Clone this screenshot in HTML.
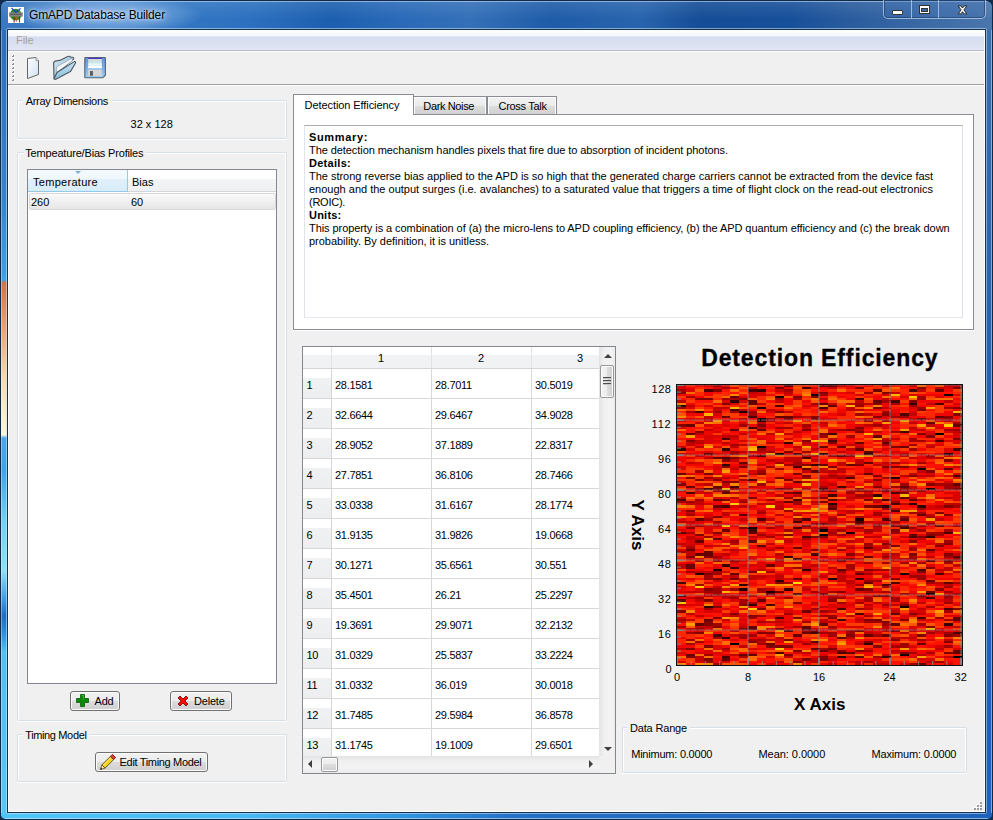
<!DOCTYPE html>
<html><head><meta charset="utf-8"><title>GmAPD Database Builder</title>
<style>
*{margin:0;padding:0;box-sizing:border-box}
html,body{width:993px;height:820px;overflow:hidden;background:#132c48}
body{position:relative;font-family:"Liberation Sans",sans-serif;font-size:11px;color:#000}
.a{position:absolute}
.t{position:absolute;white-space:pre;line-height:1}
.gb{position:absolute;border:1px solid #d5dfe5;border-radius:2px;box-shadow:inset 1px 1px 0 #fff,inset -1px 0 0 #fff,0 1px 0 #fff}
.gbt{position:absolute;background:#f0f0f0;padding:0 2px 0 2px;height:12px}
.btn{position:absolute;border:1px solid #707070;border-radius:3px;background:linear-gradient(#f2f2f2 0,#ebebeb 50%,#dddddd 50%,#cfcfcf 100%);box-shadow:inset 0 0 0 1px #fcfcfc}
.hdr{background:linear-gradient(#ffffff 0,#ffffff 40%,#f1f2f4 40%,#f1f2f4 100%)}
</style></head><body>

<div class="a" style="left:0;top:0;width:993px;height:820px;border-radius:7px 7px 6px 6px;background:#1b4e8f;overflow:hidden;border:1px solid #0d2a4a">
<div class="a" style="left:0;top:0;width:991px;height:30px;background:linear-gradient(90deg,#3a78c0 0px,#3579c4 150px,#2c70bf 250px,#1d5faf 330px,#2a6ab8 400px,#3470b8 470px,#1f5ca8 550px,#2864ad 640px,#154d96 700px,#17509a 790px,#2a5c9e 850px,#4a76ac 990px)"></div>
<div class="a" style="left:0;top:0;width:991px;height:30px;background:linear-gradient(rgba(255,255,255,.1),rgba(255,255,255,0) 60%)"></div>
<div class="a" style="left:10px;top:-6px;width:190px;height:40px;background:radial-gradient(ellipse at center,rgba(200,225,255,.55) 0,rgba(170,205,245,.35) 45%,rgba(120,170,230,0) 72%)"></div>
<div class="a" style="left:5px;top:0;width:981px;height:1px;background:rgba(200,220,245,.6)"></div>
<div class="a" style="left:0;top:29px;width:7px;height:790px;background:linear-gradient(#2d6db9 0.00%,#3585cc 21.65%,#3ea2e4 31.65%,#d27348 32.03%,#eba678 38.10%,#f6dcb0 44.43%,#fbf5d5 50.76%,#fdf8dc 51.27%,#4aa6ea 51.65%,#3fa4e8 55.82%,#6fd2f2 62.15%,#8be2f4 68.48%,#3a98e2 72.28%,#1f6dc4 74.18%,#2a8ad8 76.08%,#4ec0f2 78.61%,#55c8f6 100.00%)"></div>
<div class="a" style="left:0;top:29px;width:1px;height:790px;background:rgba(255,255,255,.35)"></div>
<div class="a" style="left:985px;top:29px;width:7px;height:790px;background:linear-gradient(#3d6fae 0,#2b63ad 30%,#1f5fb3 60%,#1e62b9 100%)"></div>
<div class="a" style="left:990px;top:29px;width:1px;height:785px;background:rgba(200,225,255,.55)"></div>
<div class="a" style="left:0;top:812px;width:991px;height:7px;background:linear-gradient(90deg,#50c6f6 0,#48b8f2 25%,#3296e0 40%,#2470c6 52%,#1e62bb 100%)"></div>
<div class="a" style="left:4px;top:817px;width:983px;height:1px;background:rgba(210,235,255,.6)"></div>
<div class="a" style="left:5px;top:27px;width:981px;height:786px;border:1px solid rgba(210,230,250,.55);border-radius:2px"></div>
<div class="a" style="left:6px;top:28px;width:979px;height:784px;border:1px solid #13324f"></div>
<div class="a" style="left:7px;top:29px;width:977px;height:782px;border:1px solid #fff;background:#f0f0f0"></div>
</div>
<svg class="a" style="left:8px;top:7px" width="16" height="16" viewBox="0 0 16 16">
<rect width="16" height="16" fill="#fff"/>
<circle cx="7.7" cy="7.6" r="5.9" fill="#2e8a1e"/>
<rect x="1" y="5.4" width="13.8" height="4.2" fill="#8c8c8c"/>
<rect x="2" y="6.6" width="11.6" height="1.6" fill="#5e5e5e"/>
<path d="M3.4 0.8 L8 5.4 L12.6 1.4" stroke="#1a3fd0" stroke-width="1.2" fill="none"/>
<path d="M6.1 9.6 V15.4 M11.5 9.6 V15.4" stroke="#8a2e1a" stroke-width="1.1"/>
<path d="M8.6 9.6 V14.6" stroke="#9a6a3a" stroke-width="1"/>
</svg>
<div class="t" style="left:29px;top:8.84px;font-size:12px;color:#000;letter-spacing:-0.155px;text-shadow:0 0 6px rgba(255,255,255,.9),0 0 3px rgba(255,255,255,.7)">GmAPD Database Builder</div>
<div class="a" style="left:883px;top:-2px;width:103px;height:21px;border:1px solid rgba(190,210,235,.75);border-radius:0 0 5px 5px;box-shadow:inset 0 0 0 1px rgba(20,50,90,.5);background:rgba(60,110,175,.35)"></div>
<div class="a" style="left:911px;top:0;width:1px;height:18px;background:rgba(190,210,235,.75)"></div>
<div class="a" style="left:938px;top:0;width:1px;height:18px;background:rgba(190,210,235,.75)"></div>
<div class="a" style="left:892px;top:10px;width:11px;height:5px;background:#fff;border:1px solid #333;border-radius:1px"></div>
<div class="a" style="left:919px;top:5px;width:11px;height:9px;border:1px solid #333;background:#fff"></div>
<div class="a" style="left:921px;top:8px;width:7px;height:4px;border:1px solid #333;background:#3a67a3"></div>
<svg class="a" style="left:955px;top:3px" width="15" height="14" viewBox="0 0 15 14">
<path transform="translate(3.2,2.9)" d="M0 0 L2.7 0 L4.3 2.2 L5.9 0 L8.6 0 L5.7 4 L8.6 8 L5.9 8 L4.3 5.8 L2.7 8 L0 8 L2.9 4 Z" fill="#fff" stroke="#2a2a2a" stroke-width="1" stroke-linejoin="round"/>
</svg>
<div class="a" style="left:8px;top:30px;width:976px;height:21px;background:linear-gradient(#ffffff 0,#f3f5fa 6px,#d6dcef 7px,#dbe0f1 14px,#e2e6f5 20px);border-bottom:1px solid #b6bbcc"></div>
<div class="a" style="left:8px;top:51px;width:976px;height:1px;background:#fbfbfc"></div>
<div class="t" style="left:16px;top:34.69px;font-size:11px;color:#a6a0a0;letter-spacing:-0.059px;">File</div>
<div class="a" style="left:8px;top:84px;width:976px;height:1px;background:#a0a0a0"></div>
<div class="a" style="left:8px;top:85px;width:976px;height:1px;background:#fff"></div>
<div class="a" style="left:12px;top:55px;width:2px;height:2px;background:linear-gradient(135deg,#f0f0f0 0,#f0f0f0 35%,#8c8c8c 35%);box-shadow:1px 1px 0 #fff"></div>
<div class="a" style="left:12px;top:59px;width:2px;height:2px;background:linear-gradient(135deg,#f0f0f0 0,#f0f0f0 35%,#8c8c8c 35%);box-shadow:1px 1px 0 #fff"></div>
<div class="a" style="left:12px;top:63px;width:2px;height:2px;background:linear-gradient(135deg,#f0f0f0 0,#f0f0f0 35%,#8c8c8c 35%);box-shadow:1px 1px 0 #fff"></div>
<div class="a" style="left:12px;top:67px;width:2px;height:2px;background:linear-gradient(135deg,#f0f0f0 0,#f0f0f0 35%,#8c8c8c 35%);box-shadow:1px 1px 0 #fff"></div>
<div class="a" style="left:12px;top:71px;width:2px;height:2px;background:linear-gradient(135deg,#f0f0f0 0,#f0f0f0 35%,#8c8c8c 35%);box-shadow:1px 1px 0 #fff"></div>
<div class="a" style="left:12px;top:75px;width:2px;height:2px;background:linear-gradient(135deg,#f0f0f0 0,#f0f0f0 35%,#8c8c8c 35%);box-shadow:1px 1px 0 #fff"></div>
<div class="a" style="left:12px;top:79px;width:2px;height:2px;background:linear-gradient(135deg,#f0f0f0 0,#f0f0f0 35%,#8c8c8c 35%);box-shadow:1px 1px 0 #fff"></div>
<svg class="a" style="left:22px;top:54px" width="22" height="28" viewBox="0 0 22 28">
<defs><linearGradient id="gd" x1="0" y1="0" x2="1" y2="1"><stop offset="0" stop-color="#ffffff"/><stop offset="1" stop-color="#cfe0f5"/></linearGradient></defs>
<path d="M5.5 4.5 L14 3.5 L16.5 6.5 L16.5 20.5 L5.5 24.5 Z" fill="url(#gd)" stroke="#666" stroke-width="1"/>
<path d="M14 3.5 L14 6.8 L16.5 6.5" fill="#e8eef8" stroke="#888" stroke-width=".8"/>
</svg>
<svg class="a" style="left:48px;top:52px" width="32" height="32" viewBox="0 0 32 32">
<defs><linearGradient id="gf" x1="0" y1="0" x2="1" y2="1"><stop offset="0" stop-color="#d6eefa"/><stop offset="1" stop-color="#7aa8c4"/></linearGradient>
<linearGradient id="gf2" x1="0" y1="0" x2="0" y2="1"><stop offset="0" stop-color="#c4e6f8"/><stop offset="1" stop-color="#8cbcd8"/></linearGradient></defs>
<path d="M5.6 10.8 C6 9.6 7.6 8.6 9.6 8.6 L11.8 8.4 L19.8 4.6 C21 4.1 22.2 4.3 22.8 5.3 L24.8 5.2 C25.7 5.4 26 6.3 25.6 7.2 L9.5 20.5 L6 26.8 Z" fill="url(#gf)" stroke="#505860" stroke-width="1.1" stroke-linejoin="round"/>
<path d="M8.2 21 L8.8 14.8 L23.8 6.4 L24.6 8.6 Z" fill="#f4f6f8" stroke="#8a9aa6" stroke-width=".6"/>
<path d="M6 26.8 L9.2 20.2 L26.3 9.6 C27.4 9.3 28 10.2 27.4 11.2 L22.4 19.6 L7.4 27.4 Z" fill="url(#gf2)" stroke="#505860" stroke-width="1.1" stroke-linejoin="round"/>
</svg>
<svg class="a" style="left:80px;top:52px" width="32" height="32" viewBox="0 0 32 32">
<defs><linearGradient id="gs" x1="0" y1="0" x2="0" y2="1"><stop offset="0" stop-color="#5a90de"/><stop offset="1" stop-color="#9ccef6"/></linearGradient>
<linearGradient id="gl" x1="0" y1="0" x2="0" y2="1"><stop offset="0" stop-color="#d8d8d4"/><stop offset=".5" stop-color="#c4ecee"/><stop offset="1" stop-color="#f4f8fa"/></linearGradient></defs>
<path d="M4.8 6 Q4.8 5.5 5.3 5.5 L25 5.5 Q25.4 5.5 25.4 6 L25.4 23.2 L22.8 25.8 L5.3 25.8 Q4.8 25.8 4.8 25.3 Z" fill="url(#gs)" stroke="#56646e" stroke-width="1.1"/>
<rect x="8.2" y="5.8" width="13.6" height="1.2" fill="#4836c8"/>
<rect x="8.2" y="7" width="13.6" height="9.4" fill="url(#gl)"/>
<rect x="8.2" y="11.6" width="13.6" height="1" fill="#ffffff"/>
<rect x="8.2" y="13.8" width="13.6" height="1.8" fill="#ffffff"/>
<rect x="8.2" y="17.6" width="13.6" height="6.4" fill="#d6d6d6"/>
<rect x="10" y="19" width="2.9" height="4.8" fill="#5e5e5e"/>
</svg>
<div class="gb" style="left:17px;top:100px;width:270px;height:39px"></div>
<div class="gbt" style="left:23px;top:95px;width:89px"></div>
<div class="t" style="left:25.7px;top:95.69px;font-size:11px;letter-spacing:-0.282px;">Array Dimensions</div>
<div class="t" style="left:130.5px;top:118.69px;font-size:11px;letter-spacing:0.012px;">32 x 128</div>
<div class="gb" style="left:17px;top:152px;width:270px;height:569px"></div>
<div class="gbt" style="left:24px;top:147px;width:122px"></div>
<div class="t" style="left:25.3px;top:147.69px;font-size:11px;letter-spacing:-0.178px;">Tempeature/Bias Profiles</div>
<div class="a" style="left:27px;top:169px;width:250px;height:515px;border:1px solid #828790;background:#fff"></div>
<div class="a" style="left:28px;top:170px;width:248px;height:22px;background:linear-gradient(#ffffff 0,#ffffff 45%,#f3f4f6 45%,#eff0f2 100%);border-bottom:1px solid #d5d5d5"></div>
<div class="a" style="left:28px;top:170px;width:100px;height:22px;background:linear-gradient(#f3f9fd 0,#f0f8fd 45%,#dff0fa 45%,#d7ecf9 100%);border:1px solid #96c8ea;border-top:none;border-left:none"></div>
<div class="a" style="left:75px;top:171px;width:0;height:0;border-left:3.5px solid transparent;border-right:3.5px solid transparent;border-top:3.5px solid #79afd9"></div>
<div class="t" style="left:33px;top:176.69px;font-size:11px;letter-spacing:0.294px;">Temperature</div>
<div class="t" style="left:132px;top:176.69px;font-size:11px;">Bias</div>
<div class="a" style="left:29px;top:193px;width:247px;height:17px;border:1px solid #d9d9d9;border-radius:2px;background:linear-gradient(#fafafa,#e6e6e6)"></div>
<div class="t" style="left:31px;top:196.69px;font-size:11px;">260</div>
<div class="t" style="left:131px;top:196.69px;font-size:11px;">60</div>
<div class="btn" style="left:70px;top:691px;width:50px;height:20px"></div>
<svg class="a" style="left:76px;top:694px" width="14" height="14" viewBox="0 0 14 14">
<path d="M4.5 0.5h4v4h4v4h-4v4h-4v-4h-4v-4h4z" fill="#0a8a0a" stroke="#075c07" stroke-width=".8"/>
<path d="M5.5 1.5h2v4" stroke="#3fc23f" stroke-width=".8" fill="none"/>
</svg>
<div class="t" style="left:94.6px;top:695.69px;font-size:11px;letter-spacing:-0.293px;">Add</div>
<div class="btn" style="left:170px;top:691px;width:62px;height:20px"></div>
<svg class="a" style="left:176px;top:694px" width="14" height="14" viewBox="0 0 14 14">
<path d="M2 4 L4 2 L7 5 L10 2 L12 4 L9 7 L12 10 L10 12 L7 9 L4 12 L2 10 L5 7 Z" fill="#ff0a0a" stroke="#7a1010" stroke-width=".9"/>
</svg>
<div class="t" style="left:194px;top:695.69px;font-size:11px;letter-spacing:-0.2px;">Delete</div>
<div class="gb" style="left:17px;top:734px;width:270px;height:48px"></div>
<div class="gbt" style="left:23px;top:729px;width:67px"></div>
<div class="t" style="left:25.2px;top:729.69px;font-size:11px;letter-spacing:-0.36px;">Timing Model</div>
<div class="btn" style="left:95px;top:752px;width:113px;height:20px"></div>
<svg class="a" style="left:99px;top:754px" width="17" height="17" viewBox="0 0 17 17">
<path d="M2.9 10.9 L11.4 2.4 L14.6 5.6 L6.1 14.1 Z" fill="#f5d21a" stroke="#5a4a10" stroke-width=".9" stroke-linejoin="round"/>
<path d="M3.8 11.8 L12.2 3.3" stroke="#fff3a0" stroke-width=".8"/>
<path d="M11.4 2.4 L13.4 0.4 L16.6 3.6 L14.6 5.6 Z" fill="#e0392c" stroke="#7a1a12" stroke-width=".9" stroke-linejoin="round"/>
<path d="M2.9 10.9 L6.1 14.1 L1.3 15.7 Z" fill="#f2dcaa" stroke="#5a4a10" stroke-width=".8" stroke-linejoin="round"/>
<path d="M1.3 15.7 L2 13.6 L3.4 15 Z" fill="#222"/>
</svg>
<div class="t" style="left:119.6px;top:756.69px;font-size:11px;letter-spacing:-0.332px;">Edit Timing Model</div>
<div class="a" style="left:293px;top:114px;width:681px;height:216px;border:1px solid #898c95;background:#fff;box-shadow:0 1px 0 #fff"></div>
<div class="a" style="left:413px;top:96px;width:74px;height:19px;border:1px solid #898c95;border-bottom:none;background:linear-gradient(#f2f2f2 0,#ebebeb 50%,#dddddd 50%,#cfcfcf 100%);box-shadow:inset 0 0 0 1px #fcfcfc"></div>
<div class="a" style="left:487px;top:96px;width:70px;height:19px;border:1px solid #898c95;border-bottom:none;background:linear-gradient(#f2f2f2 0,#ebebeb 50%,#dddddd 50%,#cfcfcf 100%);box-shadow:inset 0 0 0 1px #fcfcfc"></div>
<div class="a" style="left:413px;top:114px;width:561px;height:1px;background:#898c95"></div>
<div class="a" style="left:293px;top:94px;width:121px;height:21px;border:1px solid #898c95;border-bottom:none;background:#fff"></div>
<div class="t" style="left:304.6px;top:99.69px;font-size:11px;letter-spacing:-0.08px;">Detection Efficiency</div>
<div class="t" style="left:423.3px;top:100.69px;font-size:11px;letter-spacing:-0.361px;">Dark Noise</div>
<div class="t" style="left:498.6px;top:100.69px;font-size:11px;letter-spacing:-0.316px;">Cross Talk</div>
<div class="a" style="left:304px;top:125px;width:659px;height:193px;border:1px solid #abadb3;border-color:#abadb3 #dbdfe6 #e3e9ef #e2e3ea;background:#fff"></div>
<div class="t" style="left:309px;top:131.69px;font-size:11px;font-weight:bold;letter-spacing:0.65px;">Summary:</div>
<div class="t" style="left:309px;top:144.69px;font-size:11px;letter-spacing:-0.07px;">The detection mechanism handles pixels that fire due to absorption of incident photons.</div>
<div class="t" style="left:309px;top:157.69px;font-size:11px;font-weight:bold;letter-spacing:0.281px;">Details:</div>
<div class="t" style="left:309px;top:170.69px;font-size:11px;letter-spacing:-0.021px;">The strong reverse bias applied to the APD is so high that the generated charge carriers cannot be extracted from the device fast</div>
<div class="t" style="left:309px;top:183.69px;font-size:11px;letter-spacing:0.002px;">enough and the output surges (i.e. avalanches) to a saturated value that triggers a time of flight clock on the read-out electronics</div>
<div class="t" style="left:309px;top:196.69px;font-size:11px;letter-spacing:-0.242px;">(ROIC).</div>
<div class="t" style="left:309px;top:209.69px;font-size:11px;font-weight:bold;letter-spacing:0.221px;">Units:</div>
<div class="t" style="left:309px;top:222.69px;font-size:11px;letter-spacing:-0.07px;">This property is a combination of (a) the micro-lens to APD coupling efficiency, (b) the APD quantum efficiency and (c) the break down</div>
<div class="t" style="left:309px;top:235.69px;font-size:11px;letter-spacing:-0.032px;">probability. By definition, it is unitless.</div>
<div class="a" style="left:302px;top:346px;width:314px;height:428px;border:1px solid #828790;background:#fff;overflow:hidden">
<div class="a hdr" style="left:0;top:0;width:296px;height:22px;border-bottom:1px solid #d5d5d5"></div>
<div class="a" style="left:28px;top:0;width:1px;height:21px;background:#e3e3e3"></div>
<div class="a" style="left:128px;top:0;width:1px;height:21px;background:#e3e3e3"></div>
<div class="a" style="left:228px;top:0;width:1px;height:21px;background:#e3e3e3"></div>
<div class="t" style="left:78px;top:5.69px;font-size:11px;transform:translateX(-50%);">1</div>
<div class="t" style="left:178px;top:5.69px;font-size:11px;transform:translateX(-50%);">2</div>
<div class="t" style="left:274px;top:5.69px;font-size:11px;">3</div>
<div class="a" style="left:0;top:22px;width:29px;height:30px;background:linear-gradient(#fff 0,#fff 30%,#f0f1f3 30%,#eceef0 100%);border-bottom:1px solid #d5d5d5;border-right:1px solid #d5d5d5"></div>
<div class="a" style="left:29px;top:51px;width:267px;height:1px;background:#d8d8d8"></div>
<div class="t" style="left:3.5px;top:32.69px;font-size:11px;letter-spacing:-0.3px;">1</div>
<div class="t" style="left:32px;top:32.69px;font-size:11px;letter-spacing:-0.3px;">28.1581</div>
<div class="t" style="left:132px;top:32.69px;font-size:11px;letter-spacing:-0.3px;">28.7011</div>
<div class="t" style="left:232px;top:32.69px;font-size:11px;letter-spacing:-0.3px;">30.5019</div>
<div class="a" style="left:0;top:52px;width:29px;height:30px;background:linear-gradient(#fff 0,#fff 30%,#f0f1f3 30%,#eceef0 100%);border-bottom:1px solid #d5d5d5;border-right:1px solid #d5d5d5"></div>
<div class="a" style="left:29px;top:81px;width:267px;height:1px;background:#d8d8d8"></div>
<div class="t" style="left:3.5px;top:62.69px;font-size:11px;letter-spacing:-0.3px;">2</div>
<div class="t" style="left:32px;top:62.69px;font-size:11px;letter-spacing:-0.3px;">32.6644</div>
<div class="t" style="left:132px;top:62.69px;font-size:11px;letter-spacing:-0.3px;">29.6467</div>
<div class="t" style="left:232px;top:62.69px;font-size:11px;letter-spacing:-0.3px;">34.9028</div>
<div class="a" style="left:0;top:82px;width:29px;height:30px;background:linear-gradient(#fff 0,#fff 30%,#f0f1f3 30%,#eceef0 100%);border-bottom:1px solid #d5d5d5;border-right:1px solid #d5d5d5"></div>
<div class="a" style="left:29px;top:111px;width:267px;height:1px;background:#d8d8d8"></div>
<div class="t" style="left:3.5px;top:92.69px;font-size:11px;letter-spacing:-0.3px;">3</div>
<div class="t" style="left:32px;top:92.69px;font-size:11px;letter-spacing:-0.3px;">28.9052</div>
<div class="t" style="left:132px;top:92.69px;font-size:11px;letter-spacing:-0.3px;">37.1889</div>
<div class="t" style="left:232px;top:92.69px;font-size:11px;letter-spacing:-0.3px;">22.8317</div>
<div class="a" style="left:0;top:112px;width:29px;height:30px;background:linear-gradient(#fff 0,#fff 30%,#f0f1f3 30%,#eceef0 100%);border-bottom:1px solid #d5d5d5;border-right:1px solid #d5d5d5"></div>
<div class="a" style="left:29px;top:141px;width:267px;height:1px;background:#d8d8d8"></div>
<div class="t" style="left:3.5px;top:122.69px;font-size:11px;letter-spacing:-0.3px;">4</div>
<div class="t" style="left:32px;top:122.69px;font-size:11px;letter-spacing:-0.3px;">27.7851</div>
<div class="t" style="left:132px;top:122.69px;font-size:11px;letter-spacing:-0.3px;">36.8106</div>
<div class="t" style="left:232px;top:122.69px;font-size:11px;letter-spacing:-0.3px;">28.7466</div>
<div class="a" style="left:0;top:142px;width:29px;height:30px;background:linear-gradient(#fff 0,#fff 30%,#f0f1f3 30%,#eceef0 100%);border-bottom:1px solid #d5d5d5;border-right:1px solid #d5d5d5"></div>
<div class="a" style="left:29px;top:171px;width:267px;height:1px;background:#d8d8d8"></div>
<div class="t" style="left:3.5px;top:152.69px;font-size:11px;letter-spacing:-0.3px;">5</div>
<div class="t" style="left:32px;top:152.69px;font-size:11px;letter-spacing:-0.3px;">33.0338</div>
<div class="t" style="left:132px;top:152.69px;font-size:11px;letter-spacing:-0.3px;">31.6167</div>
<div class="t" style="left:232px;top:152.69px;font-size:11px;letter-spacing:-0.3px;">28.1774</div>
<div class="a" style="left:0;top:172px;width:29px;height:30px;background:linear-gradient(#fff 0,#fff 30%,#f0f1f3 30%,#eceef0 100%);border-bottom:1px solid #d5d5d5;border-right:1px solid #d5d5d5"></div>
<div class="a" style="left:29px;top:201px;width:267px;height:1px;background:#d8d8d8"></div>
<div class="t" style="left:3.5px;top:182.69px;font-size:11px;letter-spacing:-0.3px;">6</div>
<div class="t" style="left:32px;top:182.69px;font-size:11px;letter-spacing:-0.3px;">31.9135</div>
<div class="t" style="left:132px;top:182.69px;font-size:11px;letter-spacing:-0.3px;">31.9826</div>
<div class="t" style="left:232px;top:182.69px;font-size:11px;letter-spacing:-0.3px;">19.0668</div>
<div class="a" style="left:0;top:202px;width:29px;height:30px;background:linear-gradient(#fff 0,#fff 30%,#f0f1f3 30%,#eceef0 100%);border-bottom:1px solid #d5d5d5;border-right:1px solid #d5d5d5"></div>
<div class="a" style="left:29px;top:231px;width:267px;height:1px;background:#d8d8d8"></div>
<div class="t" style="left:3.5px;top:212.69px;font-size:11px;letter-spacing:-0.3px;">7</div>
<div class="t" style="left:32px;top:212.69px;font-size:11px;letter-spacing:-0.3px;">30.1271</div>
<div class="t" style="left:132px;top:212.69px;font-size:11px;letter-spacing:-0.3px;">35.6561</div>
<div class="t" style="left:232px;top:212.69px;font-size:11px;letter-spacing:-0.3px;">30.551</div>
<div class="a" style="left:0;top:232px;width:29px;height:30px;background:linear-gradient(#fff 0,#fff 30%,#f0f1f3 30%,#eceef0 100%);border-bottom:1px solid #d5d5d5;border-right:1px solid #d5d5d5"></div>
<div class="a" style="left:29px;top:261px;width:267px;height:1px;background:#d8d8d8"></div>
<div class="t" style="left:3.5px;top:242.69px;font-size:11px;letter-spacing:-0.3px;">8</div>
<div class="t" style="left:32px;top:242.69px;font-size:11px;letter-spacing:-0.3px;">35.4501</div>
<div class="t" style="left:132px;top:242.69px;font-size:11px;letter-spacing:-0.3px;">26.21</div>
<div class="t" style="left:232px;top:242.69px;font-size:11px;letter-spacing:-0.3px;">25.2297</div>
<div class="a" style="left:0;top:262px;width:29px;height:30px;background:linear-gradient(#fff 0,#fff 30%,#f0f1f3 30%,#eceef0 100%);border-bottom:1px solid #d5d5d5;border-right:1px solid #d5d5d5"></div>
<div class="a" style="left:29px;top:291px;width:267px;height:1px;background:#d8d8d8"></div>
<div class="t" style="left:3.5px;top:272.69px;font-size:11px;letter-spacing:-0.3px;">9</div>
<div class="t" style="left:32px;top:272.69px;font-size:11px;letter-spacing:-0.3px;">19.3691</div>
<div class="t" style="left:132px;top:272.69px;font-size:11px;letter-spacing:-0.3px;">29.9071</div>
<div class="t" style="left:232px;top:272.69px;font-size:11px;letter-spacing:-0.3px;">32.2132</div>
<div class="a" style="left:0;top:292px;width:29px;height:30px;background:linear-gradient(#fff 0,#fff 30%,#f0f1f3 30%,#eceef0 100%);border-bottom:1px solid #d5d5d5;border-right:1px solid #d5d5d5"></div>
<div class="a" style="left:29px;top:321px;width:267px;height:1px;background:#d8d8d8"></div>
<div class="t" style="left:3.5px;top:302.69px;font-size:11px;letter-spacing:-0.3px;">10</div>
<div class="t" style="left:32px;top:302.69px;font-size:11px;letter-spacing:-0.3px;">31.0329</div>
<div class="t" style="left:132px;top:302.69px;font-size:11px;letter-spacing:-0.3px;">25.5837</div>
<div class="t" style="left:232px;top:302.69px;font-size:11px;letter-spacing:-0.3px;">33.2224</div>
<div class="a" style="left:0;top:322px;width:29px;height:30px;background:linear-gradient(#fff 0,#fff 30%,#f0f1f3 30%,#eceef0 100%);border-bottom:1px solid #d5d5d5;border-right:1px solid #d5d5d5"></div>
<div class="a" style="left:29px;top:351px;width:267px;height:1px;background:#d8d8d8"></div>
<div class="t" style="left:3.5px;top:332.69px;font-size:11px;letter-spacing:-0.3px;">11</div>
<div class="t" style="left:32px;top:332.69px;font-size:11px;letter-spacing:-0.3px;">31.0332</div>
<div class="t" style="left:132px;top:332.69px;font-size:11px;letter-spacing:-0.3px;">36.019</div>
<div class="t" style="left:232px;top:332.69px;font-size:11px;letter-spacing:-0.3px;">30.0018</div>
<div class="a" style="left:0;top:352px;width:29px;height:30px;background:linear-gradient(#fff 0,#fff 30%,#f0f1f3 30%,#eceef0 100%);border-bottom:1px solid #d5d5d5;border-right:1px solid #d5d5d5"></div>
<div class="a" style="left:29px;top:381px;width:267px;height:1px;background:#d8d8d8"></div>
<div class="t" style="left:3.5px;top:362.69px;font-size:11px;letter-spacing:-0.3px;">12</div>
<div class="t" style="left:32px;top:362.69px;font-size:11px;letter-spacing:-0.3px;">31.7485</div>
<div class="t" style="left:132px;top:362.69px;font-size:11px;letter-spacing:-0.3px;">29.5984</div>
<div class="t" style="left:232px;top:362.69px;font-size:11px;letter-spacing:-0.3px;">36.8578</div>
<div class="a" style="left:0;top:382px;width:29px;height:30px;background:linear-gradient(#fff 0,#fff 30%,#f0f1f3 30%,#eceef0 100%);border-bottom:1px solid #d5d5d5;border-right:1px solid #d5d5d5"></div>
<div class="a" style="left:29px;top:411px;width:267px;height:1px;background:#d8d8d8"></div>
<div class="t" style="left:3.5px;top:392.69px;font-size:11px;letter-spacing:-0.3px;">13</div>
<div class="t" style="left:32px;top:392.69px;font-size:11px;letter-spacing:-0.3px;">31.1745</div>
<div class="t" style="left:132px;top:392.69px;font-size:11px;letter-spacing:-0.3px;">19.1009</div>
<div class="t" style="left:232px;top:392.69px;font-size:11px;letter-spacing:-0.3px;">29.6501</div>
<div class="a" style="left:128px;top:22px;width:1px;height:400px;background:#d8d8d8"></div>
<div class="a" style="left:228px;top:22px;width:1px;height:400px;background:#d8d8d8"></div>
<div class="a" style="left:296px;top:0;width:17px;height:409px;background:linear-gradient(90deg,#e3e3e3 0,#f0f0f0 30%,#f3f3f3 70%,#eaeaea 100%)"></div>
<div class="a" style="left:301px;top:7px;width:0;height:0;border-left:4px solid transparent;border-right:4px solid transparent;border-bottom:4px solid #404040"></div>
<div class="a" style="left:297px;top:18px;width:14px;height:33px;border:1px solid #979797;border-radius:2px;background:linear-gradient(90deg,#f3f3f3 0,#ececec 50%,#dedede 50%,#cfcfcf 100%);box-shadow:inset 0 0 0 1px #fdfdfd"></div>
<div class="a" style="left:300px;top:30px;width:8px;height:1px;background:#4c4c4c;box-shadow:0 1px 0 #c8c8c8"></div>
<div class="a" style="left:300px;top:33px;width:8px;height:1px;background:#4c4c4c;box-shadow:0 1px 0 #c8c8c8"></div>
<div class="a" style="left:300px;top:36px;width:8px;height:1px;background:#4c4c4c;box-shadow:0 1px 0 #c8c8c8"></div>
<div class="a" style="left:301px;top:400px;width:0;height:0;border-left:4px solid transparent;border-right:4px solid transparent;border-top:4px solid #404040"></div>
<div class="a" style="left:0;top:409px;width:296px;height:17px;background:linear-gradient(#e3e3e3 0,#f0f0f0 30%,#f3f3f3 70%,#eaeaea 100%)"></div>
<div class="a" style="left:5px;top:413px;width:0;height:0;border-top:4px solid transparent;border-bottom:4px solid transparent;border-right:4px solid #404040"></div>
<div class="a" style="left:286px;top:413px;width:0;height:0;border-top:4px solid transparent;border-bottom:4px solid transparent;border-left:4px solid #404040"></div>
<div class="a" style="left:18px;top:410px;width:17px;height:15px;border:1px solid #979797;border-radius:2px;background:linear-gradient(#f3f3f3 0,#ececec 50%,#dedede 50%,#cfcfcf 100%);box-shadow:inset 0 0 0 1px #fdfdfd"></div>
<div class="a" style="left:296px;top:409px;width:17px;height:17px;background:#f0f0f0"></div>
</div>
<div class="t" style="left:701.2px;top:347.03px;font-size:23px;font-weight:bold;letter-spacing:0.873px;-webkit-text-stroke:0.3px #000;">Detection Efficiency</div>
<svg class="a" style="left:676px;top:384px" width="287" height="282" viewBox="0 0 287 282">
<g transform="translate(1,1) scale(8.906,2.1875)" shape-rendering="crispEdges">
<path fill="#000000" d="M29 22h1v1h-1zM16 66h1v1h-1zM16 68h1v1h-1zM6 118h1v1h-1zM31 124h1v1h-1z"/><path fill="#190000" d="M15 4h1v1h-1zM30 4h1v1h-1zM11 5h1v1h-1zM9 10h1v1h-1zM7 12h1v1h-1zM9 15h1v1h-1zM9 28h1v1h-1zM11 31h1v1h-1zM27 38h1v1h-1zM24 42h1v1h-1zM28 47h1v1h-1zM20 61h1v1h-1zM8 65h1v1h-1zM19 67h1v1h-1zM4 84h1v1h-1zM2 86h1v1h-1zM25 86h1v1h-1zM17 88h1v1h-1zM7 93h1v1h-1zM10 94h1v1h-1zM28 95h1v1h-1zM25 101h1v1h-1zM25 123h1v1h-1z"/><path fill="#320000" d="M9 2h1v1h-1zM6 7h1v1h-1zM26 8h1v1h-1zM0 9h1v1h-1zM9 16h1v1h-1zM12 26h1v1h-1zM0 29h1v1h-1zM5 29h1v1h-1zM16 31h1v1h-1zM21 31h1v1h-1zM30 31h1v1h-1zM5 36h1v1h-1zM15 36h1v1h-1zM22 50h1v1h-1zM17 54h1v1h-1zM26 54h1v1h-1zM23 55h1v1h-1zM27 55h1v1h-1zM28 69h1v1h-1zM12 78h1v1h-1zM5 82h1v1h-1zM14 84h1v1h-1zM20 88h1v1h-1zM11 89h1v1h-1zM7 91h1v1h-1zM12 93h1v1h-1zM8 100h1v1h-1zM3 101h1v1h-1zM30 109h1v1h-1zM5 115h1v1h-1zM21 118h1v1h-1zM18 124h1v1h-1zM23 124h1v1h-1z"/><path fill="#4b0000" d="M14 1h1v1h-1zM3 2h1v1h-1zM8 2h1v1h-1zM26 2h1v1h-1zM20 6h1v1h-1zM24 7h1v1h-1zM29 8h1v1h-1zM11 9h1v1h-1zM16 10h1v1h-1zM6 11h1v1h-1zM2 12h1v1h-1zM25 13h1v1h-1zM8 14h1v1h-1zM8 19h1v1h-1zM25 21h1v1h-1zM17 22h1v1h-1zM5 24h1v1h-1zM17 25h1v1h-1zM29 25h1v1h-1zM31 29h1v1h-1zM9 32h1v1h-1zM5 33h1v1h-1zM14 33h1v1h-1zM13 37h1v1h-1zM31 41h1v1h-1zM19 42h1v1h-1zM8 43h1v1h-1zM6 46h1v1h-1zM18 46h1v1h-1zM3 47h1v1h-1zM1 49h1v1h-1zM24 49h1v1h-1zM17 50h1v1h-1zM0 52h1v1h-1zM13 52h1v1h-1zM23 52h1v1h-1zM24 54h1v1h-1zM5 55h1v1h-1zM24 57h1v1h-1zM9 61h1v1h-1zM14 61h1v1h-1zM23 61h1v1h-1zM13 62h1v1h-1zM20 62h1v1h-1zM13 65h1v1h-1zM25 65h1v1h-1zM8 66h1v1h-1zM30 67h1v1h-1zM14 69h1v1h-1zM26 69h1v1h-1zM15 77h1v1h-1zM13 79h1v1h-1zM6 83h1v1h-1zM27 84h1v1h-1zM29 86h1v1h-1zM0 90h1v1h-1zM24 90h1v1h-1zM23 91h1v1h-1zM28 97h1v1h-1zM10 100h1v1h-1zM18 102h1v1h-1zM30 102h1v1h-1zM20 104h1v1h-1zM11 106h1v1h-1zM27 106h1v1h-1zM18 107h1v1h-1zM15 113h1v1h-1zM31 113h1v1h-1zM4 114h1v1h-1zM11 122h1v1h-1zM18 122h1v1h-1zM5 124h1v1h-1z"/><path fill="#640000" d="M12 0h1v1h-1zM16 0h1v1h-1zM17 0h1v1h-1zM22 2h1v1h-1zM29 2h1v1h-1zM6 5h1v1h-1zM8 7h1v1h-1zM22 7h1v1h-1zM8 8h1v1h-1zM16 8h1v1h-1zM17 9h1v1h-1zM5 14h1v1h-1zM11 14h1v1h-1zM12 14h1v1h-1zM29 14h1v1h-1zM28 17h1v1h-1zM1 18h1v1h-1zM31 18h1v1h-1zM6 20h1v1h-1zM9 20h1v1h-1zM1 22h1v1h-1zM22 23h1v1h-1zM20 26h1v1h-1zM23 26h1v1h-1zM16 28h1v1h-1zM18 28h1v1h-1zM25 28h1v1h-1zM20 29h1v1h-1zM21 30h1v1h-1zM3 31h1v1h-1zM13 31h1v1h-1zM18 32h1v1h-1zM4 33h1v1h-1zM7 35h1v1h-1zM21 35h1v1h-1zM16 36h1v1h-1zM19 36h1v1h-1zM14 38h1v1h-1zM30 38h1v1h-1zM15 39h1v1h-1zM0 40h1v1h-1zM21 40h1v1h-1zM13 44h1v1h-1zM31 45h1v1h-1zM1 46h1v1h-1zM4 46h1v1h-1zM25 46h1v1h-1zM16 47h1v1h-1zM5 49h1v1h-1zM13 49h1v1h-1zM25 51h1v1h-1zM4 52h1v1h-1zM17 52h1v1h-1zM26 52h1v1h-1zM12 53h1v1h-1zM4 55h1v1h-1zM22 55h1v1h-1zM17 56h1v1h-1zM7 59h1v1h-1zM27 59h1v1h-1zM2 61h1v1h-1zM25 61h1v1h-1zM29 64h1v1h-1zM5 66h1v1h-1zM0 67h1v1h-1zM8 67h1v1h-1zM26 68h1v1h-1zM4 70h1v1h-1zM2 71h1v1h-1zM8 71h1v1h-1zM9 73h1v1h-1zM13 74h1v1h-1zM21 74h1v1h-1zM1 75h1v1h-1zM28 75h1v1h-1zM3 76h1v1h-1zM2 77h1v1h-1zM3 77h1v1h-1zM21 78h1v1h-1zM31 78h1v1h-1zM28 80h1v1h-1zM1 82h1v1h-1zM10 82h1v1h-1zM1 83h1v1h-1zM18 84h1v1h-1zM6 86h1v1h-1zM20 86h1v1h-1zM13 88h1v1h-1zM28 89h1v1h-1zM21 90h1v1h-1zM30 90h1v1h-1zM20 93h1v1h-1zM11 94h1v1h-1zM28 94h1v1h-1zM13 95h1v1h-1zM0 96h1v1h-1zM0 98h1v1h-1zM9 98h1v1h-1zM14 103h1v1h-1zM24 104h1v1h-1zM31 106h1v1h-1zM3 107h1v1h-1zM31 107h1v1h-1zM2 109h1v1h-1zM16 109h1v1h-1zM24 109h1v1h-1zM8 110h1v1h-1zM14 110h1v1h-1zM8 111h1v1h-1zM14 111h1v1h-1zM12 112h1v1h-1zM14 113h1v1h-1zM13 114h1v1h-1zM21 114h1v1h-1zM23 114h1v1h-1zM18 115h1v1h-1zM15 117h1v1h-1zM10 118h1v1h-1zM27 118h1v1h-1zM15 120h1v1h-1zM16 121h1v1h-1zM31 121h1v1h-1zM19 122h1v1h-1zM31 122h1v1h-1zM1 123h1v1h-1zM7 123h1v1h-1zM8 123h1v1h-1zM20 124h1v1h-1zM5 125h1v1h-1zM27 127h1v1h-1z"/><path fill="#830000" d="M11 1h1v1h-1zM20 1h1v1h-1zM27 1h1v1h-1zM31 1h1v1h-1zM4 2h1v1h-1zM0 3h1v1h-1zM16 3h1v1h-1zM23 3h1v1h-1zM13 5h1v1h-1zM15 5h1v1h-1zM2 6h1v1h-1zM3 6h1v1h-1zM7 6h1v1h-1zM26 7h1v1h-1zM5 8h1v1h-1zM22 8h1v1h-1zM22 10h1v1h-1zM31 10h1v1h-1zM27 11h1v1h-1zM11 12h1v1h-1zM23 13h1v1h-1zM31 13h1v1h-1zM15 14h1v1h-1zM22 14h1v1h-1zM30 14h1v1h-1zM12 15h1v1h-1zM15 15h1v1h-1zM27 15h1v1h-1zM0 18h1v1h-1zM9 18h1v1h-1zM20 19h1v1h-1zM14 20h1v1h-1zM19 20h1v1h-1zM2 21h1v1h-1zM20 21h1v1h-1zM16 22h1v1h-1zM27 22h1v1h-1zM28 23h1v1h-1zM31 24h1v1h-1zM1 25h1v1h-1zM14 25h1v1h-1zM17 26h1v1h-1zM24 28h1v1h-1zM12 30h1v1h-1zM6 33h1v1h-1zM5 34h1v1h-1zM30 34h1v1h-1zM14 36h1v1h-1zM20 36h1v1h-1zM5 37h1v1h-1zM7 37h1v1h-1zM17 37h1v1h-1zM23 37h1v1h-1zM24 37h1v1h-1zM25 37h1v1h-1zM28 39h1v1h-1zM3 40h1v1h-1zM9 40h1v1h-1zM13 40h1v1h-1zM14 41h1v1h-1zM22 41h1v1h-1zM26 41h1v1h-1zM1 42h1v1h-1zM11 42h1v1h-1zM2 43h1v1h-1zM4 43h1v1h-1zM12 43h1v1h-1zM22 43h1v1h-1zM5 44h1v1h-1zM6 44h1v1h-1zM0 45h1v1h-1zM28 45h1v1h-1zM22 46h1v1h-1zM4 47h1v1h-1zM11 47h1v1h-1zM31 47h1v1h-1zM5 48h1v1h-1zM17 48h1v1h-1zM23 48h1v1h-1zM12 49h1v1h-1zM25 49h1v1h-1zM8 51h1v1h-1zM16 51h1v1h-1zM5 52h1v1h-1zM21 52h1v1h-1zM16 53h1v1h-1zM17 55h1v1h-1zM21 55h1v1h-1zM30 55h1v1h-1zM1 57h1v1h-1zM29 58h1v1h-1zM30 59h1v1h-1zM4 60h1v1h-1zM16 63h1v1h-1zM20 63h1v1h-1zM14 64h1v1h-1zM24 64h1v1h-1zM25 64h1v1h-1zM1 65h1v1h-1zM7 65h1v1h-1zM24 66h1v1h-1zM4 67h1v1h-1zM2 68h1v1h-1zM12 68h1v1h-1zM28 68h1v1h-1zM15 69h1v1h-1zM16 69h1v1h-1zM27 69h1v1h-1zM26 71h1v1h-1zM23 72h1v1h-1zM30 72h1v1h-1zM24 73h1v1h-1zM29 73h1v1h-1zM15 75h1v1h-1zM19 77h1v1h-1zM26 77h1v1h-1zM30 77h1v1h-1zM1 78h1v1h-1zM3 78h1v1h-1zM19 79h1v1h-1zM18 80h1v1h-1zM30 80h1v1h-1zM28 83h1v1h-1zM21 84h1v1h-1zM8 85h1v1h-1zM27 85h1v1h-1zM3 86h1v1h-1zM4 88h1v1h-1zM6 88h1v1h-1zM24 88h1v1h-1zM11 90h1v1h-1zM3 93h1v1h-1zM21 93h1v1h-1zM29 93h1v1h-1zM18 94h1v1h-1zM10 95h1v1h-1zM16 95h1v1h-1zM22 96h1v1h-1zM23 96h1v1h-1zM27 96h1v1h-1zM3 98h1v1h-1zM17 98h1v1h-1zM13 99h1v1h-1zM7 100h1v1h-1zM25 100h1v1h-1zM4 101h1v1h-1zM9 102h1v1h-1zM31 102h1v1h-1zM0 103h1v1h-1zM6 104h1v1h-1zM26 104h1v1h-1zM8 105h1v1h-1zM4 106h1v1h-1zM13 106h1v1h-1zM17 106h1v1h-1zM21 107h1v1h-1zM22 107h1v1h-1zM25 107h1v1h-1zM3 108h1v1h-1zM23 108h1v1h-1zM3 109h1v1h-1zM4 110h1v1h-1zM28 110h1v1h-1zM7 111h1v1h-1zM11 111h1v1h-1zM15 112h1v1h-1zM20 112h1v1h-1zM24 112h1v1h-1zM2 113h1v1h-1zM9 113h1v1h-1zM10 113h1v1h-1zM19 114h1v1h-1zM27 114h1v1h-1zM30 114h1v1h-1zM12 116h1v1h-1zM24 116h1v1h-1zM8 117h1v1h-1zM21 117h1v1h-1zM30 117h1v1h-1zM3 119h1v1h-1zM10 119h1v1h-1zM11 119h1v1h-1zM12 119h1v1h-1zM22 119h1v1h-1zM1 120h1v1h-1zM17 120h1v1h-1zM13 121h1v1h-1zM18 121h1v1h-1zM20 121h1v1h-1zM25 122h1v1h-1zM30 122h1v1h-1zM12 123h1v1h-1zM1 124h1v1h-1zM16 124h1v1h-1zM3 125h1v1h-1zM14 125h1v1h-1zM16 125h1v1h-1zM13 126h1v1h-1z"/><path fill="#a20000" d="M4 0h1v1h-1zM5 1h1v1h-1zM0 2h1v1h-1zM12 2h1v1h-1zM21 3h1v1h-1zM16 4h1v1h-1zM1 5h1v1h-1zM27 5h1v1h-1zM5 6h1v1h-1zM6 6h1v1h-1zM11 6h1v1h-1zM13 6h1v1h-1zM27 6h1v1h-1zM23 7h1v1h-1zM15 8h1v1h-1zM20 8h1v1h-1zM24 8h1v1h-1zM20 9h1v1h-1zM26 9h1v1h-1zM0 10h1v1h-1zM27 10h1v1h-1zM30 10h1v1h-1zM1 12h1v1h-1zM4 12h1v1h-1zM6 12h1v1h-1zM8 12h1v1h-1zM23 12h1v1h-1zM8 13h1v1h-1zM20 13h1v1h-1zM13 14h1v1h-1zM24 14h1v1h-1zM25 14h1v1h-1zM10 15h1v1h-1zM30 15h1v1h-1zM21 16h1v1h-1zM23 16h1v1h-1zM31 17h1v1h-1zM7 18h1v1h-1zM14 18h1v1h-1zM22 18h1v1h-1zM11 19h1v1h-1zM12 19h1v1h-1zM18 20h1v1h-1zM20 20h1v1h-1zM30 20h1v1h-1zM31 20h1v1h-1zM24 21h1v1h-1zM16 23h1v1h-1zM19 23h1v1h-1zM26 24h1v1h-1zM23 25h1v1h-1zM26 25h1v1h-1zM27 25h1v1h-1zM6 27h1v1h-1zM23 27h1v1h-1zM26 27h1v1h-1zM9 29h1v1h-1zM26 29h1v1h-1zM6 30h1v1h-1zM10 30h1v1h-1zM14 30h1v1h-1zM6 31h1v1h-1zM8 32h1v1h-1zM17 32h1v1h-1zM19 32h1v1h-1zM28 32h1v1h-1zM11 35h1v1h-1zM13 35h1v1h-1zM24 35h1v1h-1zM27 35h1v1h-1zM12 36h1v1h-1zM13 36h1v1h-1zM10 37h1v1h-1zM11 38h1v1h-1zM2 39h1v1h-1zM9 39h1v1h-1zM7 41h1v1h-1zM17 41h1v1h-1zM3 42h1v1h-1zM14 42h1v1h-1zM18 42h1v1h-1zM23 42h1v1h-1zM7 43h1v1h-1zM9 45h1v1h-1zM25 45h1v1h-1zM29 45h1v1h-1zM30 45h1v1h-1zM16 46h1v1h-1zM24 46h1v1h-1zM30 46h1v1h-1zM31 46h1v1h-1zM2 47h1v1h-1zM6 47h1v1h-1zM12 47h1v1h-1zM20 47h1v1h-1zM25 47h1v1h-1zM30 47h1v1h-1zM4 48h1v1h-1zM16 48h1v1h-1zM20 48h1v1h-1zM21 48h1v1h-1zM27 48h1v1h-1zM19 49h1v1h-1zM20 50h1v1h-1zM21 50h1v1h-1zM12 51h1v1h-1zM2 52h1v1h-1zM10 52h1v1h-1zM0 53h1v1h-1zM1 53h1v1h-1zM7 53h1v1h-1zM13 53h1v1h-1zM24 53h1v1h-1zM13 54h1v1h-1zM31 55h1v1h-1zM23 56h1v1h-1zM27 56h1v1h-1zM12 57h1v1h-1zM9 58h1v1h-1zM22 58h1v1h-1zM26 58h1v1h-1zM27 58h1v1h-1zM1 59h1v1h-1zM18 59h1v1h-1zM22 59h1v1h-1zM20 60h1v1h-1zM25 60h1v1h-1zM28 60h1v1h-1zM3 61h1v1h-1zM13 61h1v1h-1zM17 61h1v1h-1zM4 62h1v1h-1zM24 62h1v1h-1zM15 63h1v1h-1zM28 63h1v1h-1zM2 64h1v1h-1zM22 64h1v1h-1zM27 64h1v1h-1zM31 64h1v1h-1zM10 65h1v1h-1zM16 65h1v1h-1zM20 65h1v1h-1zM26 65h1v1h-1zM12 66h1v1h-1zM18 66h1v1h-1zM21 66h1v1h-1zM27 66h1v1h-1zM30 66h1v1h-1zM1 67h1v1h-1zM17 67h1v1h-1zM24 67h1v1h-1zM28 67h1v1h-1zM29 67h1v1h-1zM9 68h1v1h-1zM18 68h1v1h-1zM29 68h1v1h-1zM3 69h1v1h-1zM10 69h1v1h-1zM14 70h1v1h-1zM6 71h1v1h-1zM30 71h1v1h-1zM21 72h1v1h-1zM21 73h1v1h-1zM1 74h1v1h-1zM11 74h1v1h-1zM26 74h1v1h-1zM18 75h1v1h-1zM26 75h1v1h-1zM0 76h1v1h-1zM4 78h1v1h-1zM23 78h1v1h-1zM26 78h1v1h-1zM30 78h1v1h-1zM26 79h1v1h-1zM31 79h1v1h-1zM2 80h1v1h-1zM4 80h1v1h-1zM6 80h1v1h-1zM21 81h1v1h-1zM23 81h1v1h-1zM25 81h1v1h-1zM27 81h1v1h-1zM30 81h1v1h-1zM19 82h1v1h-1zM13 83h1v1h-1zM19 83h1v1h-1zM22 84h1v1h-1zM23 84h1v1h-1zM1 85h1v1h-1zM4 85h1v1h-1zM10 85h1v1h-1zM18 85h1v1h-1zM4 86h1v1h-1zM21 86h1v1h-1zM3 87h1v1h-1zM26 87h1v1h-1zM27 87h1v1h-1zM3 88h1v1h-1zM27 88h1v1h-1zM21 89h1v1h-1zM22 89h1v1h-1zM12 90h1v1h-1zM28 90h1v1h-1zM31 90h1v1h-1zM2 91h1v1h-1zM20 91h1v1h-1zM23 92h1v1h-1zM30 92h1v1h-1zM4 93h1v1h-1zM6 93h1v1h-1zM9 93h1v1h-1zM3 94h1v1h-1zM4 94h1v1h-1zM9 94h1v1h-1zM15 94h1v1h-1zM17 94h1v1h-1zM23 94h1v1h-1zM30 94h1v1h-1zM4 95h1v1h-1zM25 95h1v1h-1zM31 95h1v1h-1zM30 96h1v1h-1zM2 97h1v1h-1zM6 97h1v1h-1zM12 97h1v1h-1zM17 97h1v1h-1zM18 97h1v1h-1zM21 97h1v1h-1zM24 97h1v1h-1zM30 97h1v1h-1zM7 98h1v1h-1zM21 98h1v1h-1zM24 98h1v1h-1zM7 99h1v1h-1zM8 99h1v1h-1zM18 99h1v1h-1zM20 99h1v1h-1zM30 99h1v1h-1zM23 100h1v1h-1zM28 101h1v1h-1zM3 102h1v1h-1zM15 102h1v1h-1zM20 102h1v1h-1zM16 103h1v1h-1zM30 103h1v1h-1zM12 104h1v1h-1zM9 105h1v1h-1zM16 105h1v1h-1zM17 105h1v1h-1zM21 105h1v1h-1zM8 106h1v1h-1zM29 106h1v1h-1zM0 107h1v1h-1zM30 107h1v1h-1zM9 108h1v1h-1zM14 108h1v1h-1zM21 108h1v1h-1zM22 108h1v1h-1zM4 109h1v1h-1zM23 109h1v1h-1zM27 109h1v1h-1zM0 110h1v1h-1zM13 110h1v1h-1zM17 110h1v1h-1zM2 111h1v1h-1zM14 112h1v1h-1zM19 112h1v1h-1zM1 113h1v1h-1zM16 113h1v1h-1zM17 113h1v1h-1zM19 113h1v1h-1zM28 113h1v1h-1zM30 113h1v1h-1zM7 114h1v1h-1zM8 114h1v1h-1zM17 114h1v1h-1zM22 114h1v1h-1zM31 114h1v1h-1zM4 115h1v1h-1zM7 115h1v1h-1zM1 116h1v1h-1zM8 116h1v1h-1zM9 116h1v1h-1zM27 116h1v1h-1zM2 117h1v1h-1zM1 118h1v1h-1zM9 118h1v1h-1zM14 118h1v1h-1zM25 118h1v1h-1zM24 119h1v1h-1zM25 119h1v1h-1zM30 119h1v1h-1zM5 120h1v1h-1zM16 120h1v1h-1zM21 121h1v1h-1zM26 122h1v1h-1zM28 122h1v1h-1zM3 123h1v1h-1zM7 124h1v1h-1zM22 124h1v1h-1zM3 126h1v1h-1zM21 126h1v1h-1zM29 126h1v1h-1zM4 127h1v1h-1zM26 127h1v1h-1z"/><path fill="#c10000" d="M18 0h1v1h-1zM23 0h1v1h-1zM26 0h1v1h-1zM30 0h1v1h-1zM31 0h1v1h-1zM8 1h1v1h-1zM17 1h1v1h-1zM29 1h1v1h-1zM11 2h1v1h-1zM27 2h1v1h-1zM8 3h1v1h-1zM12 3h1v1h-1zM24 3h1v1h-1zM16 6h1v1h-1zM23 6h1v1h-1zM0 7h1v1h-1zM11 7h1v1h-1zM20 7h1v1h-1zM30 7h1v1h-1zM9 8h1v1h-1zM17 8h1v1h-1zM19 8h1v1h-1zM21 8h1v1h-1zM28 8h1v1h-1zM1 9h1v1h-1zM4 10h1v1h-1zM5 10h1v1h-1zM19 10h1v1h-1zM23 10h1v1h-1zM4 11h1v1h-1zM7 11h1v1h-1zM10 11h1v1h-1zM19 11h1v1h-1zM20 11h1v1h-1zM12 12h1v1h-1zM21 13h1v1h-1zM26 13h1v1h-1zM3 14h1v1h-1zM14 14h1v1h-1zM3 15h1v1h-1zM7 15h1v1h-1zM21 15h1v1h-1zM26 15h1v1h-1zM29 15h1v1h-1zM10 16h1v1h-1zM30 16h1v1h-1zM2 17h1v1h-1zM9 17h1v1h-1zM12 17h1v1h-1zM16 17h1v1h-1zM26 17h1v1h-1zM21 18h1v1h-1zM28 18h1v1h-1zM9 19h1v1h-1zM14 19h1v1h-1zM26 19h1v1h-1zM3 20h1v1h-1zM17 20h1v1h-1zM27 20h1v1h-1zM13 21h1v1h-1zM22 21h1v1h-1zM31 21h1v1h-1zM2 22h1v1h-1zM7 22h1v1h-1zM10 22h1v1h-1zM12 22h1v1h-1zM5 23h1v1h-1zM6 23h1v1h-1zM17 24h1v1h-1zM23 24h1v1h-1zM24 24h1v1h-1zM2 25h1v1h-1zM1 26h1v1h-1zM2 26h1v1h-1zM5 26h1v1h-1zM10 26h1v1h-1zM14 26h1v1h-1zM1 27h1v1h-1zM7 27h1v1h-1zM19 27h1v1h-1zM0 28h1v1h-1zM2 28h1v1h-1zM6 28h1v1h-1zM13 28h1v1h-1zM20 28h1v1h-1zM28 28h1v1h-1zM15 29h1v1h-1zM19 29h1v1h-1zM7 30h1v1h-1zM8 30h1v1h-1zM9 30h1v1h-1zM18 30h1v1h-1zM22 30h1v1h-1zM25 31h1v1h-1zM2 32h1v1h-1zM14 32h1v1h-1zM15 32h1v1h-1zM22 32h1v1h-1zM23 32h1v1h-1zM25 32h1v1h-1zM30 32h1v1h-1zM3 33h1v1h-1zM7 33h1v1h-1zM12 33h1v1h-1zM13 33h1v1h-1zM26 33h1v1h-1zM28 33h1v1h-1zM29 33h1v1h-1zM6 34h1v1h-1zM10 34h1v1h-1zM12 34h1v1h-1zM13 34h1v1h-1zM15 34h1v1h-1zM20 34h1v1h-1zM1 35h1v1h-1zM18 35h1v1h-1zM20 35h1v1h-1zM23 35h1v1h-1zM7 36h1v1h-1zM9 36h1v1h-1zM18 36h1v1h-1zM22 36h1v1h-1zM27 37h1v1h-1zM31 37h1v1h-1zM6 38h1v1h-1zM16 38h1v1h-1zM18 38h1v1h-1zM14 39h1v1h-1zM16 39h1v1h-1zM17 39h1v1h-1zM18 39h1v1h-1zM27 39h1v1h-1zM8 40h1v1h-1zM26 40h1v1h-1zM18 41h1v1h-1zM19 41h1v1h-1zM25 41h1v1h-1zM27 41h1v1h-1zM28 41h1v1h-1zM4 42h1v1h-1zM5 42h1v1h-1zM16 42h1v1h-1zM17 42h1v1h-1zM10 44h1v1h-1zM14 44h1v1h-1zM19 44h1v1h-1zM21 44h1v1h-1zM24 44h1v1h-1zM3 45h1v1h-1zM5 45h1v1h-1zM17 45h1v1h-1zM8 46h1v1h-1zM26 46h1v1h-1zM14 47h1v1h-1zM23 47h1v1h-1zM26 47h1v1h-1zM9 48h1v1h-1zM15 48h1v1h-1zM19 48h1v1h-1zM25 48h1v1h-1zM3 49h1v1h-1zM6 49h1v1h-1zM11 50h1v1h-1zM13 50h1v1h-1zM0 51h1v1h-1zM6 51h1v1h-1zM14 51h1v1h-1zM15 51h1v1h-1zM19 51h1v1h-1zM20 51h1v1h-1zM26 51h1v1h-1zM30 51h1v1h-1zM7 52h1v1h-1zM18 52h1v1h-1zM22 52h1v1h-1zM27 52h1v1h-1zM2 53h1v1h-1zM11 53h1v1h-1zM15 53h1v1h-1zM22 53h1v1h-1zM1 54h1v1h-1zM2 54h1v1h-1zM9 54h1v1h-1zM10 54h1v1h-1zM25 54h1v1h-1zM30 54h1v1h-1zM31 54h1v1h-1zM7 55h1v1h-1zM11 55h1v1h-1zM29 55h1v1h-1zM4 56h1v1h-1zM11 56h1v1h-1zM24 56h1v1h-1zM9 57h1v1h-1zM19 57h1v1h-1zM20 57h1v1h-1zM1 58h1v1h-1zM5 58h1v1h-1zM19 58h1v1h-1zM23 58h1v1h-1zM5 59h1v1h-1zM11 59h1v1h-1zM13 59h1v1h-1zM28 59h1v1h-1zM17 60h1v1h-1zM7 61h1v1h-1zM10 61h1v1h-1zM29 61h1v1h-1zM0 62h1v1h-1zM1 62h1v1h-1zM17 62h1v1h-1zM19 62h1v1h-1zM21 62h1v1h-1zM17 63h1v1h-1zM22 63h1v1h-1zM23 63h1v1h-1zM4 64h1v1h-1zM11 64h1v1h-1zM14 65h1v1h-1zM15 65h1v1h-1zM19 65h1v1h-1zM22 65h1v1h-1zM15 66h1v1h-1zM17 66h1v1h-1zM22 66h1v1h-1zM21 67h1v1h-1zM11 68h1v1h-1zM17 68h1v1h-1zM1 69h1v1h-1zM8 69h1v1h-1zM21 69h1v1h-1zM22 69h1v1h-1zM25 69h1v1h-1zM1 70h1v1h-1zM2 70h1v1h-1zM27 70h1v1h-1zM12 71h1v1h-1zM17 71h1v1h-1zM19 71h1v1h-1zM0 72h1v1h-1zM6 72h1v1h-1zM10 72h1v1h-1zM29 72h1v1h-1zM1 73h1v1h-1zM3 73h1v1h-1zM23 73h1v1h-1zM19 74h1v1h-1zM22 74h1v1h-1zM23 74h1v1h-1zM6 75h1v1h-1zM10 75h1v1h-1zM22 75h1v1h-1zM1 76h1v1h-1zM28 76h1v1h-1zM1 77h1v1h-1zM5 77h1v1h-1zM11 77h1v1h-1zM23 77h1v1h-1zM24 77h1v1h-1zM31 77h1v1h-1zM16 78h1v1h-1zM28 78h1v1h-1zM4 79h1v1h-1zM18 79h1v1h-1zM25 79h1v1h-1zM11 80h1v1h-1zM16 80h1v1h-1zM0 82h1v1h-1zM15 82h1v1h-1zM31 82h1v1h-1zM0 83h1v1h-1zM14 83h1v1h-1zM17 83h1v1h-1zM30 83h1v1h-1zM9 84h1v1h-1zM19 84h1v1h-1zM29 84h1v1h-1zM30 84h1v1h-1zM2 85h1v1h-1zM3 85h1v1h-1zM20 85h1v1h-1zM31 85h1v1h-1zM17 86h1v1h-1zM6 87h1v1h-1zM8 87h1v1h-1zM9 87h1v1h-1zM11 87h1v1h-1zM16 87h1v1h-1zM18 87h1v1h-1zM23 87h1v1h-1zM8 88h1v1h-1zM11 88h1v1h-1zM15 88h1v1h-1zM18 88h1v1h-1zM4 89h1v1h-1zM15 89h1v1h-1zM18 89h1v1h-1zM19 89h1v1h-1zM19 90h1v1h-1zM29 90h1v1h-1zM30 91h1v1h-1zM4 92h1v1h-1zM16 92h1v1h-1zM10 93h1v1h-1zM14 93h1v1h-1zM1 94h1v1h-1zM2 94h1v1h-1zM21 94h1v1h-1zM22 94h1v1h-1zM7 95h1v1h-1zM3 96h1v1h-1zM5 96h1v1h-1zM6 96h1v1h-1zM8 96h1v1h-1zM17 96h1v1h-1zM1 97h1v1h-1zM5 97h1v1h-1zM27 97h1v1h-1zM2 98h1v1h-1zM30 98h1v1h-1zM15 99h1v1h-1zM22 99h1v1h-1zM25 99h1v1h-1zM27 99h1v1h-1zM0 100h1v1h-1zM21 100h1v1h-1zM24 100h1v1h-1zM16 101h1v1h-1zM21 102h1v1h-1zM27 102h1v1h-1zM17 103h1v1h-1zM24 103h1v1h-1zM1 104h1v1h-1zM27 104h1v1h-1zM2 105h1v1h-1zM6 105h1v1h-1zM19 105h1v1h-1zM1 107h1v1h-1zM5 107h1v1h-1zM16 107h1v1h-1zM20 107h1v1h-1zM27 107h1v1h-1zM0 108h1v1h-1zM10 108h1v1h-1zM11 108h1v1h-1zM16 108h1v1h-1zM17 108h1v1h-1zM2 110h1v1h-1zM3 110h1v1h-1zM7 110h1v1h-1zM23 110h1v1h-1zM31 110h1v1h-1zM1 111h1v1h-1zM15 111h1v1h-1zM17 111h1v1h-1zM23 111h1v1h-1zM6 112h1v1h-1zM23 112h1v1h-1zM26 112h1v1h-1zM29 112h1v1h-1zM21 113h1v1h-1zM25 113h1v1h-1zM6 114h1v1h-1zM11 115h1v1h-1zM19 115h1v1h-1zM24 115h1v1h-1zM25 115h1v1h-1zM26 115h1v1h-1zM10 116h1v1h-1zM30 116h1v1h-1zM9 117h1v1h-1zM13 117h1v1h-1zM20 118h1v1h-1zM7 119h1v1h-1zM0 120h1v1h-1zM29 120h1v1h-1zM17 121h1v1h-1zM24 121h1v1h-1zM14 122h1v1h-1zM6 123h1v1h-1zM23 123h1v1h-1zM27 123h1v1h-1zM2 124h1v1h-1zM12 124h1v1h-1zM30 124h1v1h-1zM2 125h1v1h-1zM15 125h1v1h-1zM17 125h1v1h-1zM11 126h1v1h-1zM15 126h1v1h-1zM20 126h1v1h-1zM28 126h1v1h-1zM17 127h1v1h-1zM20 127h1v1h-1zM22 127h1v1h-1zM23 127h1v1h-1z"/><path fill="#d90300" d="M0 0h1v1h-1zM3 0h1v1h-1zM19 0h1v1h-1zM0 1h1v1h-1zM4 1h1v1h-1zM6 1h1v1h-1zM15 1h1v1h-1zM30 1h1v1h-1zM1 2h1v1h-1zM9 3h1v1h-1zM15 3h1v1h-1zM19 3h1v1h-1zM8 4h1v1h-1zM9 4h1v1h-1zM12 4h1v1h-1zM20 4h1v1h-1zM23 4h1v1h-1zM26 4h1v1h-1zM31 4h1v1h-1zM7 5h1v1h-1zM8 5h1v1h-1zM25 5h1v1h-1zM29 5h1v1h-1zM5 7h1v1h-1zM7 7h1v1h-1zM6 8h1v1h-1zM31 8h1v1h-1zM3 9h1v1h-1zM14 9h1v1h-1zM15 9h1v1h-1zM1 10h1v1h-1zM26 10h1v1h-1zM16 11h1v1h-1zM10 12h1v1h-1zM26 12h1v1h-1zM4 13h1v1h-1zM18 13h1v1h-1zM24 13h1v1h-1zM23 14h1v1h-1zM1 15h1v1h-1zM16 15h1v1h-1zM17 15h1v1h-1zM28 15h1v1h-1zM0 16h1v1h-1zM3 16h1v1h-1zM5 16h1v1h-1zM7 17h1v1h-1zM11 17h1v1h-1zM22 17h1v1h-1zM3 18h1v1h-1zM5 18h1v1h-1zM16 18h1v1h-1zM20 18h1v1h-1zM23 18h1v1h-1zM0 19h1v1h-1zM4 19h1v1h-1zM23 19h1v1h-1zM29 19h1v1h-1zM26 20h1v1h-1zM4 21h1v1h-1zM8 21h1v1h-1zM11 21h1v1h-1zM17 21h1v1h-1zM28 21h1v1h-1zM30 21h1v1h-1zM28 22h1v1h-1zM31 22h1v1h-1zM3 23h1v1h-1zM4 23h1v1h-1zM31 23h1v1h-1zM3 24h1v1h-1zM6 24h1v1h-1zM9 24h1v1h-1zM12 24h1v1h-1zM29 24h1v1h-1zM3 25h1v1h-1zM4 25h1v1h-1zM7 25h1v1h-1zM22 25h1v1h-1zM30 25h1v1h-1zM31 25h1v1h-1zM3 26h1v1h-1zM11 26h1v1h-1zM31 26h1v1h-1zM14 27h1v1h-1zM15 27h1v1h-1zM18 27h1v1h-1zM20 27h1v1h-1zM28 27h1v1h-1zM29 27h1v1h-1zM4 28h1v1h-1zM10 28h1v1h-1zM1 29h1v1h-1zM10 29h1v1h-1zM13 29h1v1h-1zM17 29h1v1h-1zM23 29h1v1h-1zM30 29h1v1h-1zM3 30h1v1h-1zM5 30h1v1h-1zM24 30h1v1h-1zM30 30h1v1h-1zM0 31h1v1h-1zM1 31h1v1h-1zM4 31h1v1h-1zM19 31h1v1h-1zM27 31h1v1h-1zM29 31h1v1h-1zM1 33h1v1h-1zM27 33h1v1h-1zM11 34h1v1h-1zM2 35h1v1h-1zM25 35h1v1h-1zM23 36h1v1h-1zM0 37h1v1h-1zM4 37h1v1h-1zM6 37h1v1h-1zM26 37h1v1h-1zM0 38h1v1h-1zM4 38h1v1h-1zM9 38h1v1h-1zM21 38h1v1h-1zM23 38h1v1h-1zM8 39h1v1h-1zM21 39h1v1h-1zM1 40h1v1h-1zM4 40h1v1h-1zM17 40h1v1h-1zM20 40h1v1h-1zM28 40h1v1h-1zM31 40h1v1h-1zM16 41h1v1h-1zM30 41h1v1h-1zM6 42h1v1h-1zM12 42h1v1h-1zM13 42h1v1h-1zM31 42h1v1h-1zM3 43h1v1h-1zM24 43h1v1h-1zM29 43h1v1h-1zM0 44h1v1h-1zM16 44h1v1h-1zM22 44h1v1h-1zM30 44h1v1h-1zM2 45h1v1h-1zM16 45h1v1h-1zM22 45h1v1h-1zM5 46h1v1h-1zM9 46h1v1h-1zM12 46h1v1h-1zM14 46h1v1h-1zM19 46h1v1h-1zM10 47h1v1h-1zM17 47h1v1h-1zM0 48h1v1h-1zM2 48h1v1h-1zM22 48h1v1h-1zM24 48h1v1h-1zM26 48h1v1h-1zM29 48h1v1h-1zM2 49h1v1h-1zM7 49h1v1h-1zM8 49h1v1h-1zM10 49h1v1h-1zM21 49h1v1h-1zM28 49h1v1h-1zM30 49h1v1h-1zM31 49h1v1h-1zM16 50h1v1h-1zM19 50h1v1h-1zM31 50h1v1h-1zM4 51h1v1h-1zM21 51h1v1h-1zM24 51h1v1h-1zM29 51h1v1h-1zM31 51h1v1h-1zM19 52h1v1h-1zM24 52h1v1h-1zM31 52h1v1h-1zM3 54h1v1h-1zM11 54h1v1h-1zM15 54h1v1h-1zM6 55h1v1h-1zM8 55h1v1h-1zM19 55h1v1h-1zM28 55h1v1h-1zM28 56h1v1h-1zM29 56h1v1h-1zM0 57h1v1h-1zM18 57h1v1h-1zM13 58h1v1h-1zM14 58h1v1h-1zM15 58h1v1h-1zM3 59h1v1h-1zM16 59h1v1h-1zM3 60h1v1h-1zM21 60h1v1h-1zM23 60h1v1h-1zM0 61h1v1h-1zM2 62h1v1h-1zM9 62h1v1h-1zM11 62h1v1h-1zM16 62h1v1h-1zM18 62h1v1h-1zM22 62h1v1h-1zM23 62h1v1h-1zM27 62h1v1h-1zM28 62h1v1h-1zM1 63h1v1h-1zM4 63h1v1h-1zM8 63h1v1h-1zM24 63h1v1h-1zM1 64h1v1h-1zM3 64h1v1h-1zM6 64h1v1h-1zM19 64h1v1h-1zM3 65h1v1h-1zM11 65h1v1h-1zM0 66h1v1h-1zM3 66h1v1h-1zM13 66h1v1h-1zM20 66h1v1h-1zM26 66h1v1h-1zM3 67h1v1h-1zM9 67h1v1h-1zM13 67h1v1h-1zM14 67h1v1h-1zM4 68h1v1h-1zM10 68h1v1h-1zM19 68h1v1h-1zM23 68h1v1h-1zM27 68h1v1h-1zM9 69h1v1h-1zM8 70h1v1h-1zM12 70h1v1h-1zM16 70h1v1h-1zM20 70h1v1h-1zM26 70h1v1h-1zM1 71h1v1h-1zM5 71h1v1h-1zM14 71h1v1h-1zM20 71h1v1h-1zM22 71h1v1h-1zM23 71h1v1h-1zM25 71h1v1h-1zM1 72h1v1h-1zM2 72h1v1h-1zM14 72h1v1h-1zM28 72h1v1h-1zM0 73h1v1h-1zM4 73h1v1h-1zM5 73h1v1h-1zM14 73h1v1h-1zM18 73h1v1h-1zM19 73h1v1h-1zM9 74h1v1h-1zM10 74h1v1h-1zM17 74h1v1h-1zM31 74h1v1h-1zM0 75h1v1h-1zM5 75h1v1h-1zM14 75h1v1h-1zM21 75h1v1h-1zM29 75h1v1h-1zM6 76h1v1h-1zM12 76h1v1h-1zM14 76h1v1h-1zM16 76h1v1h-1zM4 77h1v1h-1zM20 77h1v1h-1zM8 78h1v1h-1zM11 78h1v1h-1zM24 78h1v1h-1zM1 79h1v1h-1zM2 79h1v1h-1zM5 79h1v1h-1zM8 79h1v1h-1zM11 79h1v1h-1zM15 79h1v1h-1zM17 79h1v1h-1zM20 79h1v1h-1zM23 79h1v1h-1zM24 79h1v1h-1zM30 79h1v1h-1zM7 80h1v1h-1zM24 80h1v1h-1zM26 80h1v1h-1zM31 80h1v1h-1zM1 81h1v1h-1zM6 81h1v1h-1zM9 81h1v1h-1zM11 81h1v1h-1zM13 81h1v1h-1zM20 81h1v1h-1zM7 82h1v1h-1zM8 82h1v1h-1zM9 82h1v1h-1zM11 82h1v1h-1zM14 82h1v1h-1zM26 82h1v1h-1zM28 82h1v1h-1zM4 83h1v1h-1zM9 83h1v1h-1zM12 83h1v1h-1zM24 83h1v1h-1zM8 84h1v1h-1zM15 84h1v1h-1zM24 84h1v1h-1zM5 85h1v1h-1zM14 85h1v1h-1zM21 85h1v1h-1zM24 85h1v1h-1zM29 85h1v1h-1zM11 86h1v1h-1zM18 86h1v1h-1zM22 86h1v1h-1zM23 86h1v1h-1zM24 86h1v1h-1zM26 86h1v1h-1zM27 86h1v1h-1zM30 86h1v1h-1zM5 87h1v1h-1zM10 87h1v1h-1zM19 87h1v1h-1zM1 88h1v1h-1zM5 88h1v1h-1zM7 88h1v1h-1zM9 88h1v1h-1zM12 88h1v1h-1zM21 88h1v1h-1zM31 88h1v1h-1zM7 89h1v1h-1zM3 90h1v1h-1zM5 91h1v1h-1zM19 91h1v1h-1zM22 91h1v1h-1zM29 91h1v1h-1zM0 92h1v1h-1zM14 92h1v1h-1zM19 92h1v1h-1zM2 93h1v1h-1zM5 93h1v1h-1zM16 93h1v1h-1zM24 93h1v1h-1zM0 94h1v1h-1zM16 94h1v1h-1zM20 94h1v1h-1zM3 95h1v1h-1zM19 95h1v1h-1zM26 95h1v1h-1zM30 95h1v1h-1zM4 96h1v1h-1zM18 96h1v1h-1zM21 96h1v1h-1zM9 97h1v1h-1zM11 97h1v1h-1zM6 98h1v1h-1zM20 98h1v1h-1zM29 98h1v1h-1zM4 99h1v1h-1zM23 99h1v1h-1zM1 100h1v1h-1zM2 100h1v1h-1zM4 100h1v1h-1zM15 100h1v1h-1zM17 100h1v1h-1zM18 100h1v1h-1zM19 100h1v1h-1zM29 100h1v1h-1zM31 100h1v1h-1zM9 101h1v1h-1zM17 101h1v1h-1zM18 101h1v1h-1zM21 101h1v1h-1zM23 101h1v1h-1zM5 102h1v1h-1zM7 102h1v1h-1zM11 102h1v1h-1zM24 102h1v1h-1zM3 103h1v1h-1zM4 103h1v1h-1zM12 103h1v1h-1zM15 103h1v1h-1zM26 103h1v1h-1zM27 103h1v1h-1zM5 104h1v1h-1zM5 105h1v1h-1zM7 105h1v1h-1zM11 105h1v1h-1zM25 105h1v1h-1zM26 105h1v1h-1zM30 105h1v1h-1zM31 105h1v1h-1zM0 106h1v1h-1zM20 106h1v1h-1zM23 106h1v1h-1zM25 106h1v1h-1zM7 107h1v1h-1zM11 107h1v1h-1zM28 107h1v1h-1zM12 108h1v1h-1zM20 108h1v1h-1zM31 108h1v1h-1zM7 109h1v1h-1zM11 109h1v1h-1zM12 110h1v1h-1zM19 110h1v1h-1zM20 110h1v1h-1zM26 110h1v1h-1zM30 110h1v1h-1zM3 111h1v1h-1zM10 111h1v1h-1zM21 111h1v1h-1zM26 111h1v1h-1zM29 111h1v1h-1zM2 112h1v1h-1zM21 112h1v1h-1zM28 112h1v1h-1zM31 112h1v1h-1zM22 113h1v1h-1zM29 113h1v1h-1zM10 114h1v1h-1zM26 114h1v1h-1zM9 115h1v1h-1zM6 116h1v1h-1zM11 116h1v1h-1zM22 116h1v1h-1zM26 116h1v1h-1zM28 116h1v1h-1zM11 117h1v1h-1zM14 117h1v1h-1zM20 117h1v1h-1zM15 118h1v1h-1zM4 119h1v1h-1zM17 119h1v1h-1zM26 119h1v1h-1zM29 119h1v1h-1zM4 120h1v1h-1zM8 120h1v1h-1zM21 120h1v1h-1zM31 120h1v1h-1zM3 121h1v1h-1zM5 121h1v1h-1zM0 122h1v1h-1zM2 122h1v1h-1zM3 122h1v1h-1zM4 122h1v1h-1zM8 122h1v1h-1zM10 122h1v1h-1zM13 122h1v1h-1zM17 122h1v1h-1zM24 122h1v1h-1zM5 123h1v1h-1zM16 123h1v1h-1zM10 124h1v1h-1zM17 124h1v1h-1zM19 124h1v1h-1zM26 124h1v1h-1zM13 125h1v1h-1zM22 125h1v1h-1zM27 125h1v1h-1zM28 125h1v1h-1zM0 126h1v1h-1zM2 126h1v1h-1zM5 126h1v1h-1zM7 126h1v1h-1zM14 126h1v1h-1zM19 126h1v1h-1zM22 126h1v1h-1zM23 126h1v1h-1zM10 127h1v1h-1zM25 127h1v1h-1zM30 127h1v1h-1z"/><path fill="#ef0600" d="M2 0h1v1h-1zM5 0h1v1h-1zM21 0h1v1h-1zM1 1h1v1h-1zM12 1h1v1h-1zM16 1h1v1h-1zM19 1h1v1h-1zM30 2h1v1h-1zM3 3h1v1h-1zM11 3h1v1h-1zM17 3h1v1h-1zM18 3h1v1h-1zM0 4h1v1h-1zM3 4h1v1h-1zM10 4h1v1h-1zM27 4h1v1h-1zM28 4h1v1h-1zM29 4h1v1h-1zM2 5h1v1h-1zM18 5h1v1h-1zM22 5h1v1h-1zM12 6h1v1h-1zM19 6h1v1h-1zM22 6h1v1h-1zM31 6h1v1h-1zM12 7h1v1h-1zM14 7h1v1h-1zM16 7h1v1h-1zM27 7h1v1h-1zM28 7h1v1h-1zM29 7h1v1h-1zM1 8h1v1h-1zM4 8h1v1h-1zM12 8h1v1h-1zM23 8h1v1h-1zM23 9h1v1h-1zM27 9h1v1h-1zM30 9h1v1h-1zM31 9h1v1h-1zM14 10h1v1h-1zM8 11h1v1h-1zM11 11h1v1h-1zM18 11h1v1h-1zM21 11h1v1h-1zM22 11h1v1h-1zM24 11h1v1h-1zM26 11h1v1h-1zM31 11h1v1h-1zM3 12h1v1h-1zM18 12h1v1h-1zM24 12h1v1h-1zM30 12h1v1h-1zM1 13h1v1h-1zM2 13h1v1h-1zM7 13h1v1h-1zM13 13h1v1h-1zM17 13h1v1h-1zM22 13h1v1h-1zM29 13h1v1h-1zM30 13h1v1h-1zM4 14h1v1h-1zM9 14h1v1h-1zM16 14h1v1h-1zM26 14h1v1h-1zM27 14h1v1h-1zM31 14h1v1h-1zM0 15h1v1h-1zM2 15h1v1h-1zM6 15h1v1h-1zM8 15h1v1h-1zM11 15h1v1h-1zM20 15h1v1h-1zM22 15h1v1h-1zM23 15h1v1h-1zM31 15h1v1h-1zM19 16h1v1h-1zM26 16h1v1h-1zM27 16h1v1h-1zM29 16h1v1h-1zM5 17h1v1h-1zM15 17h1v1h-1zM18 17h1v1h-1zM24 17h1v1h-1zM27 17h1v1h-1zM4 18h1v1h-1zM6 18h1v1h-1zM8 18h1v1h-1zM10 18h1v1h-1zM13 18h1v1h-1zM19 18h1v1h-1zM29 18h1v1h-1zM6 19h1v1h-1zM10 19h1v1h-1zM19 19h1v1h-1zM21 19h1v1h-1zM24 19h1v1h-1zM31 19h1v1h-1zM4 20h1v1h-1zM5 20h1v1h-1zM11 20h1v1h-1zM15 20h1v1h-1zM3 21h1v1h-1zM6 21h1v1h-1zM7 21h1v1h-1zM14 21h1v1h-1zM18 21h1v1h-1zM21 21h1v1h-1zM26 21h1v1h-1zM3 22h1v1h-1zM5 22h1v1h-1zM13 22h1v1h-1zM2 23h1v1h-1zM8 23h1v1h-1zM9 23h1v1h-1zM10 23h1v1h-1zM13 23h1v1h-1zM15 23h1v1h-1zM27 23h1v1h-1zM30 23h1v1h-1zM1 24h1v1h-1zM4 24h1v1h-1zM10 24h1v1h-1zM15 24h1v1h-1zM19 24h1v1h-1zM6 25h1v1h-1zM10 25h1v1h-1zM18 25h1v1h-1zM28 25h1v1h-1zM4 26h1v1h-1zM6 26h1v1h-1zM15 26h1v1h-1zM19 26h1v1h-1zM29 26h1v1h-1zM2 27h1v1h-1zM5 27h1v1h-1zM12 27h1v1h-1zM17 27h1v1h-1zM12 28h1v1h-1zM15 28h1v1h-1zM11 29h1v1h-1zM27 29h1v1h-1zM2 30h1v1h-1zM19 30h1v1h-1zM25 30h1v1h-1zM31 30h1v1h-1zM2 31h1v1h-1zM5 31h1v1h-1zM7 31h1v1h-1zM9 31h1v1h-1zM12 31h1v1h-1zM24 31h1v1h-1zM31 31h1v1h-1zM3 32h1v1h-1zM27 32h1v1h-1zM0 33h1v1h-1zM8 33h1v1h-1zM9 33h1v1h-1zM15 33h1v1h-1zM18 33h1v1h-1zM19 33h1v1h-1zM21 33h1v1h-1zM0 34h1v1h-1zM16 34h1v1h-1zM27 34h1v1h-1zM31 34h1v1h-1zM9 35h1v1h-1zM10 35h1v1h-1zM12 35h1v1h-1zM14 35h1v1h-1zM16 35h1v1h-1zM22 35h1v1h-1zM28 35h1v1h-1zM31 35h1v1h-1zM1 36h1v1h-1zM2 36h1v1h-1zM4 36h1v1h-1zM6 36h1v1h-1zM3 37h1v1h-1zM30 37h1v1h-1zM19 38h1v1h-1zM25 38h1v1h-1zM29 38h1v1h-1zM4 39h1v1h-1zM6 39h1v1h-1zM23 39h1v1h-1zM2 40h1v1h-1zM24 40h1v1h-1zM27 40h1v1h-1zM5 41h1v1h-1zM6 41h1v1h-1zM12 41h1v1h-1zM5 43h1v1h-1zM16 43h1v1h-1zM18 43h1v1h-1zM21 43h1v1h-1zM17 44h1v1h-1zM27 44h1v1h-1zM28 44h1v1h-1zM12 45h1v1h-1zM13 45h1v1h-1zM10 46h1v1h-1zM13 46h1v1h-1zM17 46h1v1h-1zM21 46h1v1h-1zM29 46h1v1h-1zM7 47h1v1h-1zM9 47h1v1h-1zM27 47h1v1h-1zM29 47h1v1h-1zM13 48h1v1h-1zM28 48h1v1h-1zM23 49h1v1h-1zM27 49h1v1h-1zM3 50h1v1h-1zM10 50h1v1h-1zM12 50h1v1h-1zM18 50h1v1h-1zM24 50h1v1h-1zM26 50h1v1h-1zM27 50h1v1h-1zM5 51h1v1h-1zM9 52h1v1h-1zM4 53h1v1h-1zM29 53h1v1h-1zM4 54h1v1h-1zM5 54h1v1h-1zM18 54h1v1h-1zM29 54h1v1h-1zM2 55h1v1h-1zM12 55h1v1h-1zM14 55h1v1h-1zM26 55h1v1h-1zM2 56h1v1h-1zM5 56h1v1h-1zM6 56h1v1h-1zM8 56h1v1h-1zM9 56h1v1h-1zM10 56h1v1h-1zM30 56h1v1h-1zM4 57h1v1h-1zM22 57h1v1h-1zM27 57h1v1h-1zM31 57h1v1h-1zM0 58h1v1h-1zM3 58h1v1h-1zM6 58h1v1h-1zM7 58h1v1h-1zM18 58h1v1h-1zM24 58h1v1h-1zM0 59h1v1h-1zM2 59h1v1h-1zM8 59h1v1h-1zM9 59h1v1h-1zM21 59h1v1h-1zM5 60h1v1h-1zM6 60h1v1h-1zM7 60h1v1h-1zM9 60h1v1h-1zM12 60h1v1h-1zM15 60h1v1h-1zM16 60h1v1h-1zM22 60h1v1h-1zM29 60h1v1h-1zM30 60h1v1h-1zM6 61h1v1h-1zM18 61h1v1h-1zM30 61h1v1h-1zM3 62h1v1h-1zM7 62h1v1h-1zM15 62h1v1h-1zM25 62h1v1h-1zM2 63h1v1h-1zM5 63h1v1h-1zM10 63h1v1h-1zM31 63h1v1h-1zM28 64h1v1h-1zM30 64h1v1h-1zM4 65h1v1h-1zM5 65h1v1h-1zM9 65h1v1h-1zM18 65h1v1h-1zM27 65h1v1h-1zM1 66h1v1h-1zM7 66h1v1h-1zM11 66h1v1h-1zM19 66h1v1h-1zM7 67h1v1h-1zM15 67h1v1h-1zM25 67h1v1h-1zM0 68h1v1h-1zM1 68h1v1h-1zM7 68h1v1h-1zM13 68h1v1h-1zM14 68h1v1h-1zM22 68h1v1h-1zM31 68h1v1h-1zM2 69h1v1h-1zM18 69h1v1h-1zM29 69h1v1h-1zM30 69h1v1h-1zM0 70h1v1h-1zM6 70h1v1h-1zM11 70h1v1h-1zM13 70h1v1h-1zM15 70h1v1h-1zM24 70h1v1h-1zM13 71h1v1h-1zM16 71h1v1h-1zM27 71h1v1h-1zM28 71h1v1h-1zM12 72h1v1h-1zM18 72h1v1h-1zM8 73h1v1h-1zM11 73h1v1h-1zM22 73h1v1h-1zM26 73h1v1h-1zM27 73h1v1h-1zM30 73h1v1h-1zM8 74h1v1h-1zM12 74h1v1h-1zM14 74h1v1h-1zM20 74h1v1h-1zM29 74h1v1h-1zM30 74h1v1h-1zM2 75h1v1h-1zM7 75h1v1h-1zM12 75h1v1h-1zM16 75h1v1h-1zM19 75h1v1h-1zM19 76h1v1h-1zM21 76h1v1h-1zM25 76h1v1h-1zM30 76h1v1h-1zM31 76h1v1h-1zM6 77h1v1h-1zM28 77h1v1h-1zM5 78h1v1h-1zM9 78h1v1h-1zM10 78h1v1h-1zM18 78h1v1h-1zM19 78h1v1h-1zM27 78h1v1h-1zM14 80h1v1h-1zM17 80h1v1h-1zM19 80h1v1h-1zM25 80h1v1h-1zM0 81h1v1h-1zM3 81h1v1h-1zM10 81h1v1h-1zM12 81h1v1h-1zM14 81h1v1h-1zM4 82h1v1h-1zM6 82h1v1h-1zM3 83h1v1h-1zM7 83h1v1h-1zM8 83h1v1h-1zM15 83h1v1h-1zM25 83h1v1h-1zM1 84h1v1h-1zM2 84h1v1h-1zM10 84h1v1h-1zM12 84h1v1h-1zM17 84h1v1h-1zM0 85h1v1h-1zM12 85h1v1h-1zM17 85h1v1h-1zM26 85h1v1h-1zM12 86h1v1h-1zM16 86h1v1h-1zM20 87h1v1h-1zM21 87h1v1h-1zM25 87h1v1h-1zM28 87h1v1h-1zM0 88h1v1h-1zM10 88h1v1h-1zM22 88h1v1h-1zM29 88h1v1h-1zM30 88h1v1h-1zM5 89h1v1h-1zM10 89h1v1h-1zM17 89h1v1h-1zM6 90h1v1h-1zM8 90h1v1h-1zM10 90h1v1h-1zM20 90h1v1h-1zM22 90h1v1h-1zM8 91h1v1h-1zM18 91h1v1h-1zM25 91h1v1h-1zM28 91h1v1h-1zM31 91h1v1h-1zM15 92h1v1h-1zM24 92h1v1h-1zM26 92h1v1h-1zM0 93h1v1h-1zM19 93h1v1h-1zM22 93h1v1h-1zM31 93h1v1h-1zM7 94h1v1h-1zM14 94h1v1h-1zM19 94h1v1h-1zM26 94h1v1h-1zM31 94h1v1h-1zM5 95h1v1h-1zM15 95h1v1h-1zM2 96h1v1h-1zM7 96h1v1h-1zM10 96h1v1h-1zM16 96h1v1h-1zM28 96h1v1h-1zM0 97h1v1h-1zM14 97h1v1h-1zM16 97h1v1h-1zM19 97h1v1h-1zM1 98h1v1h-1zM4 98h1v1h-1zM16 98h1v1h-1zM27 98h1v1h-1zM2 99h1v1h-1zM9 99h1v1h-1zM19 99h1v1h-1zM31 99h1v1h-1zM14 100h1v1h-1zM26 100h1v1h-1zM6 101h1v1h-1zM8 101h1v1h-1zM14 101h1v1h-1zM19 101h1v1h-1zM26 101h1v1h-1zM2 102h1v1h-1zM4 102h1v1h-1zM12 102h1v1h-1zM14 102h1v1h-1zM17 102h1v1h-1zM29 102h1v1h-1zM2 103h1v1h-1zM6 103h1v1h-1zM10 103h1v1h-1zM13 103h1v1h-1zM7 104h1v1h-1zM13 104h1v1h-1zM21 104h1v1h-1zM3 105h1v1h-1zM10 105h1v1h-1zM12 105h1v1h-1zM15 105h1v1h-1zM23 105h1v1h-1zM28 105h1v1h-1zM7 106h1v1h-1zM12 106h1v1h-1zM24 106h1v1h-1zM9 107h1v1h-1zM12 107h1v1h-1zM14 107h1v1h-1zM5 108h1v1h-1zM7 108h1v1h-1zM9 109h1v1h-1zM12 109h1v1h-1zM13 109h1v1h-1zM18 109h1v1h-1zM5 110h1v1h-1zM18 110h1v1h-1zM27 110h1v1h-1zM0 111h1v1h-1zM5 111h1v1h-1zM12 111h1v1h-1zM22 111h1v1h-1zM24 111h1v1h-1zM1 112h1v1h-1zM9 112h1v1h-1zM16 112h1v1h-1zM18 112h1v1h-1zM22 112h1v1h-1zM27 112h1v1h-1zM30 112h1v1h-1zM4 113h1v1h-1zM8 113h1v1h-1zM5 114h1v1h-1zM16 114h1v1h-1zM20 114h1v1h-1zM28 114h1v1h-1zM0 115h1v1h-1zM2 115h1v1h-1zM8 115h1v1h-1zM13 115h1v1h-1zM13 116h1v1h-1zM17 116h1v1h-1zM19 116h1v1h-1zM21 116h1v1h-1zM23 116h1v1h-1zM3 117h1v1h-1zM22 117h1v1h-1zM27 117h1v1h-1zM23 118h1v1h-1zM24 118h1v1h-1zM0 119h1v1h-1zM1 119h1v1h-1zM5 119h1v1h-1zM28 119h1v1h-1zM2 120h1v1h-1zM9 120h1v1h-1zM23 120h1v1h-1zM2 121h1v1h-1zM15 121h1v1h-1zM19 121h1v1h-1zM25 121h1v1h-1zM26 121h1v1h-1zM27 121h1v1h-1zM28 121h1v1h-1zM29 121h1v1h-1zM7 122h1v1h-1zM16 122h1v1h-1zM20 122h1v1h-1zM21 122h1v1h-1zM27 122h1v1h-1zM0 123h1v1h-1zM4 123h1v1h-1zM14 123h1v1h-1zM21 123h1v1h-1zM26 123h1v1h-1zM28 123h1v1h-1zM15 124h1v1h-1zM29 124h1v1h-1zM4 125h1v1h-1zM6 125h1v1h-1zM18 125h1v1h-1zM21 125h1v1h-1zM4 126h1v1h-1zM9 126h1v1h-1zM17 126h1v1h-1zM27 126h1v1h-1zM30 126h1v1h-1zM8 127h1v1h-1zM11 127h1v1h-1zM12 127h1v1h-1zM14 127h1v1h-1zM16 127h1v1h-1zM28 127h1v1h-1z"/><path fill="#fb1200" d="M9 0h1v1h-1zM10 0h1v1h-1zM11 0h1v1h-1zM20 0h1v1h-1zM24 0h1v1h-1zM25 0h1v1h-1zM3 1h1v1h-1zM9 1h1v1h-1zM25 1h1v1h-1zM26 1h1v1h-1zM5 2h1v1h-1zM10 2h1v1h-1zM15 2h1v1h-1zM16 2h1v1h-1zM4 3h1v1h-1zM6 3h1v1h-1zM28 3h1v1h-1zM29 3h1v1h-1zM30 3h1v1h-1zM1 4h1v1h-1zM7 4h1v1h-1zM13 4h1v1h-1zM17 4h1v1h-1zM18 4h1v1h-1zM19 4h1v1h-1zM22 4h1v1h-1zM25 4h1v1h-1zM16 5h1v1h-1zM19 5h1v1h-1zM21 5h1v1h-1zM30 5h1v1h-1zM0 6h1v1h-1zM24 6h1v1h-1zM25 6h1v1h-1zM2 7h1v1h-1zM3 7h1v1h-1zM10 7h1v1h-1zM31 7h1v1h-1zM14 8h1v1h-1zM25 8h1v1h-1zM27 8h1v1h-1zM2 9h1v1h-1zM7 9h1v1h-1zM28 9h1v1h-1zM3 10h1v1h-1zM18 10h1v1h-1zM24 10h1v1h-1zM25 10h1v1h-1zM5 11h1v1h-1zM13 11h1v1h-1zM15 11h1v1h-1zM23 11h1v1h-1zM25 11h1v1h-1zM28 11h1v1h-1zM15 12h1v1h-1zM9 13h1v1h-1zM10 13h1v1h-1zM16 13h1v1h-1zM17 14h1v1h-1zM5 15h1v1h-1zM13 15h1v1h-1zM14 15h1v1h-1zM25 15h1v1h-1zM1 16h1v1h-1zM7 16h1v1h-1zM11 16h1v1h-1zM14 16h1v1h-1zM24 16h1v1h-1zM31 16h1v1h-1zM6 17h1v1h-1zM19 17h1v1h-1zM11 18h1v1h-1zM15 18h1v1h-1zM24 18h1v1h-1zM1 19h1v1h-1zM2 19h1v1h-1zM3 19h1v1h-1zM5 19h1v1h-1zM17 19h1v1h-1zM30 19h1v1h-1zM1 20h1v1h-1zM13 20h1v1h-1zM21 20h1v1h-1zM24 20h1v1h-1zM0 21h1v1h-1zM1 21h1v1h-1zM19 21h1v1h-1zM23 21h1v1h-1zM27 21h1v1h-1zM6 22h1v1h-1zM8 22h1v1h-1zM14 22h1v1h-1zM22 22h1v1h-1zM23 22h1v1h-1zM25 22h1v1h-1zM21 23h1v1h-1zM24 23h1v1h-1zM26 23h1v1h-1zM0 24h1v1h-1zM18 24h1v1h-1zM20 24h1v1h-1zM11 25h1v1h-1zM13 25h1v1h-1zM19 25h1v1h-1zM24 25h1v1h-1zM21 26h1v1h-1zM25 26h1v1h-1zM8 27h1v1h-1zM22 27h1v1h-1zM25 27h1v1h-1zM21 28h1v1h-1zM23 28h1v1h-1zM6 29h1v1h-1zM16 29h1v1h-1zM18 29h1v1h-1zM22 29h1v1h-1zM24 29h1v1h-1zM1 30h1v1h-1zM4 30h1v1h-1zM15 30h1v1h-1zM17 30h1v1h-1zM20 30h1v1h-1zM23 30h1v1h-1zM17 31h1v1h-1zM23 31h1v1h-1zM28 31h1v1h-1zM0 32h1v1h-1zM5 32h1v1h-1zM24 32h1v1h-1zM31 32h1v1h-1zM2 33h1v1h-1zM11 33h1v1h-1zM24 33h1v1h-1zM9 34h1v1h-1zM19 34h1v1h-1zM21 34h1v1h-1zM25 34h1v1h-1zM0 35h1v1h-1zM6 35h1v1h-1zM17 35h1v1h-1zM26 35h1v1h-1zM0 36h1v1h-1zM10 36h1v1h-1zM17 36h1v1h-1zM24 36h1v1h-1zM28 36h1v1h-1zM29 36h1v1h-1zM2 37h1v1h-1zM20 37h1v1h-1zM21 37h1v1h-1zM28 37h1v1h-1zM29 37h1v1h-1zM3 38h1v1h-1zM13 38h1v1h-1zM20 38h1v1h-1zM22 38h1v1h-1zM26 38h1v1h-1zM31 38h1v1h-1zM20 39h1v1h-1zM22 39h1v1h-1zM24 39h1v1h-1zM30 39h1v1h-1zM12 40h1v1h-1zM18 40h1v1h-1zM22 40h1v1h-1zM13 41h1v1h-1zM29 41h1v1h-1zM0 42h1v1h-1zM10 42h1v1h-1zM22 42h1v1h-1zM25 42h1v1h-1zM27 42h1v1h-1zM10 43h1v1h-1zM17 43h1v1h-1zM26 43h1v1h-1zM30 43h1v1h-1zM7 44h1v1h-1zM8 44h1v1h-1zM15 44h1v1h-1zM25 44h1v1h-1zM15 45h1v1h-1zM19 45h1v1h-1zM20 45h1v1h-1zM15 46h1v1h-1zM23 46h1v1h-1zM28 46h1v1h-1zM1 47h1v1h-1zM8 47h1v1h-1zM18 47h1v1h-1zM22 47h1v1h-1zM7 48h1v1h-1zM11 48h1v1h-1zM30 48h1v1h-1zM31 48h1v1h-1zM0 49h1v1h-1zM17 49h1v1h-1zM29 49h1v1h-1zM0 50h1v1h-1zM1 50h1v1h-1zM8 50h1v1h-1zM9 50h1v1h-1zM29 50h1v1h-1zM30 50h1v1h-1zM6 52h1v1h-1zM25 52h1v1h-1zM3 53h1v1h-1zM6 53h1v1h-1zM10 53h1v1h-1zM17 53h1v1h-1zM18 53h1v1h-1zM26 53h1v1h-1zM27 53h1v1h-1zM0 54h1v1h-1zM12 54h1v1h-1zM19 54h1v1h-1zM20 54h1v1h-1zM22 54h1v1h-1zM23 54h1v1h-1zM28 54h1v1h-1zM9 55h1v1h-1zM13 55h1v1h-1zM18 55h1v1h-1zM20 55h1v1h-1zM25 55h1v1h-1zM25 56h1v1h-1zM31 56h1v1h-1zM21 57h1v1h-1zM30 57h1v1h-1zM2 58h1v1h-1zM4 58h1v1h-1zM10 58h1v1h-1zM20 58h1v1h-1zM21 58h1v1h-1zM30 58h1v1h-1zM31 58h1v1h-1zM4 59h1v1h-1zM23 59h1v1h-1zM10 60h1v1h-1zM19 60h1v1h-1zM27 60h1v1h-1zM1 61h1v1h-1zM16 61h1v1h-1zM27 61h1v1h-1zM14 62h1v1h-1zM6 63h1v1h-1zM7 63h1v1h-1zM21 63h1v1h-1zM26 63h1v1h-1zM8 64h1v1h-1zM9 64h1v1h-1zM13 64h1v1h-1zM0 65h1v1h-1zM6 65h1v1h-1zM17 65h1v1h-1zM28 65h1v1h-1zM10 66h1v1h-1zM10 67h1v1h-1zM26 67h1v1h-1zM20 68h1v1h-1zM21 68h1v1h-1zM25 68h1v1h-1zM30 68h1v1h-1zM0 69h1v1h-1zM4 69h1v1h-1zM11 69h1v1h-1zM19 69h1v1h-1zM24 69h1v1h-1zM5 70h1v1h-1zM17 70h1v1h-1zM22 70h1v1h-1zM25 70h1v1h-1zM0 71h1v1h-1zM4 71h1v1h-1zM15 71h1v1h-1zM24 71h1v1h-1zM3 72h1v1h-1zM13 72h1v1h-1zM27 72h1v1h-1zM10 73h1v1h-1zM12 73h1v1h-1zM17 73h1v1h-1zM31 73h1v1h-1zM3 74h1v1h-1zM9 75h1v1h-1zM11 75h1v1h-1zM2 76h1v1h-1zM9 76h1v1h-1zM13 76h1v1h-1zM18 76h1v1h-1zM29 76h1v1h-1zM9 77h1v1h-1zM22 77h1v1h-1zM29 77h1v1h-1zM14 78h1v1h-1zM15 78h1v1h-1zM17 78h1v1h-1zM22 78h1v1h-1zM6 79h1v1h-1zM7 79h1v1h-1zM16 79h1v1h-1zM29 79h1v1h-1zM9 80h1v1h-1zM20 80h1v1h-1zM27 80h1v1h-1zM7 81h1v1h-1zM17 81h1v1h-1zM18 81h1v1h-1zM16 82h1v1h-1zM20 82h1v1h-1zM21 82h1v1h-1zM29 82h1v1h-1zM2 83h1v1h-1zM21 83h1v1h-1zM29 83h1v1h-1zM3 84h1v1h-1zM7 84h1v1h-1zM16 84h1v1h-1zM7 85h1v1h-1zM11 85h1v1h-1zM19 85h1v1h-1zM22 85h1v1h-1zM23 85h1v1h-1zM1 86h1v1h-1zM13 86h1v1h-1zM14 86h1v1h-1zM19 86h1v1h-1zM13 87h1v1h-1zM15 87h1v1h-1zM24 87h1v1h-1zM29 87h1v1h-1zM30 87h1v1h-1zM2 88h1v1h-1zM14 88h1v1h-1zM16 88h1v1h-1zM19 88h1v1h-1zM23 88h1v1h-1zM25 88h1v1h-1zM26 88h1v1h-1zM1 89h1v1h-1zM8 89h1v1h-1zM12 89h1v1h-1zM13 89h1v1h-1zM14 89h1v1h-1zM20 89h1v1h-1zM4 90h1v1h-1zM14 90h1v1h-1zM25 90h1v1h-1zM4 91h1v1h-1zM9 91h1v1h-1zM13 91h1v1h-1zM17 91h1v1h-1zM24 91h1v1h-1zM26 91h1v1h-1zM1 92h1v1h-1zM3 92h1v1h-1zM27 92h1v1h-1zM29 92h1v1h-1zM1 93h1v1h-1zM17 93h1v1h-1zM18 93h1v1h-1zM26 93h1v1h-1zM30 93h1v1h-1zM12 94h1v1h-1zM24 94h1v1h-1zM29 94h1v1h-1zM0 95h1v1h-1zM6 95h1v1h-1zM11 95h1v1h-1zM14 95h1v1h-1zM18 95h1v1h-1zM24 95h1v1h-1zM27 95h1v1h-1zM1 96h1v1h-1zM11 96h1v1h-1zM12 96h1v1h-1zM15 96h1v1h-1zM20 96h1v1h-1zM24 96h1v1h-1zM26 96h1v1h-1zM29 96h1v1h-1zM31 96h1v1h-1zM4 97h1v1h-1zM15 97h1v1h-1zM23 97h1v1h-1zM25 97h1v1h-1zM29 97h1v1h-1zM5 98h1v1h-1zM8 98h1v1h-1zM14 98h1v1h-1zM15 98h1v1h-1zM28 98h1v1h-1zM1 99h1v1h-1zM11 99h1v1h-1zM16 99h1v1h-1zM17 99h1v1h-1zM21 99h1v1h-1zM24 99h1v1h-1zM29 99h1v1h-1zM13 100h1v1h-1zM16 100h1v1h-1zM22 100h1v1h-1zM28 100h1v1h-1zM0 101h1v1h-1zM1 101h1v1h-1zM22 101h1v1h-1zM27 101h1v1h-1zM30 101h1v1h-1zM6 102h1v1h-1zM16 102h1v1h-1zM19 102h1v1h-1zM23 102h1v1h-1zM26 102h1v1h-1zM28 102h1v1h-1zM11 103h1v1h-1zM19 103h1v1h-1zM2 104h1v1h-1zM3 104h1v1h-1zM4 104h1v1h-1zM14 104h1v1h-1zM16 104h1v1h-1zM18 104h1v1h-1zM23 104h1v1h-1zM25 104h1v1h-1zM28 104h1v1h-1zM1 105h1v1h-1zM4 105h1v1h-1zM14 105h1v1h-1zM18 105h1v1h-1zM20 105h1v1h-1zM22 105h1v1h-1zM27 105h1v1h-1zM2 106h1v1h-1zM9 106h1v1h-1zM10 106h1v1h-1zM17 107h1v1h-1zM19 107h1v1h-1zM24 107h1v1h-1zM29 107h1v1h-1zM8 108h1v1h-1zM19 108h1v1h-1zM28 108h1v1h-1zM0 109h1v1h-1zM10 109h1v1h-1zM16 111h1v1h-1zM25 111h1v1h-1zM30 111h1v1h-1zM18 113h1v1h-1zM24 113h1v1h-1zM3 114h1v1h-1zM29 114h1v1h-1zM6 115h1v1h-1zM17 115h1v1h-1zM28 115h1v1h-1zM3 116h1v1h-1zM5 116h1v1h-1zM7 116h1v1h-1zM14 116h1v1h-1zM20 116h1v1h-1zM6 117h1v1h-1zM17 117h1v1h-1zM19 117h1v1h-1zM29 117h1v1h-1zM0 118h1v1h-1zM2 118h1v1h-1zM3 118h1v1h-1zM11 118h1v1h-1zM12 118h1v1h-1zM13 118h1v1h-1zM16 118h1v1h-1zM19 118h1v1h-1zM28 118h1v1h-1zM29 118h1v1h-1zM30 118h1v1h-1zM9 119h1v1h-1zM13 119h1v1h-1zM14 119h1v1h-1zM23 119h1v1h-1zM27 119h1v1h-1zM31 119h1v1h-1zM10 120h1v1h-1zM12 120h1v1h-1zM19 120h1v1h-1zM22 120h1v1h-1zM24 120h1v1h-1zM26 120h1v1h-1zM0 121h1v1h-1zM1 121h1v1h-1zM22 121h1v1h-1zM23 121h1v1h-1zM1 122h1v1h-1zM5 122h1v1h-1zM9 122h1v1h-1zM12 122h1v1h-1zM23 122h1v1h-1zM31 123h1v1h-1zM4 124h1v1h-1zM6 124h1v1h-1zM25 124h1v1h-1zM9 125h1v1h-1zM10 125h1v1h-1zM19 125h1v1h-1zM20 125h1v1h-1zM30 125h1v1h-1zM31 125h1v1h-1zM8 126h1v1h-1zM10 126h1v1h-1zM24 126h1v1h-1zM25 126h1v1h-1zM31 126h1v1h-1zM1 127h1v1h-1zM18 127h1v1h-1zM24 127h1v1h-1zM29 127h1v1h-1zM31 127h1v1h-1z"/><path fill="#fd2700" d="M1 0h1v1h-1zM7 0h1v1h-1zM14 0h1v1h-1zM15 0h1v1h-1zM22 0h1v1h-1zM28 0h1v1h-1zM2 1h1v1h-1zM10 1h1v1h-1zM18 1h1v1h-1zM22 1h1v1h-1zM28 1h1v1h-1zM7 2h1v1h-1zM17 2h1v1h-1zM19 2h1v1h-1zM20 2h1v1h-1zM21 2h1v1h-1zM25 2h1v1h-1zM2 3h1v1h-1zM5 3h1v1h-1zM25 3h1v1h-1zM31 3h1v1h-1zM2 4h1v1h-1zM5 4h1v1h-1zM21 4h1v1h-1zM9 5h1v1h-1zM14 5h1v1h-1zM31 5h1v1h-1zM1 6h1v1h-1zM4 6h1v1h-1zM9 6h1v1h-1zM2 8h1v1h-1zM30 8h1v1h-1zM5 9h1v1h-1zM6 9h1v1h-1zM9 9h1v1h-1zM10 9h1v1h-1zM18 9h1v1h-1zM21 9h1v1h-1zM24 9h1v1h-1zM8 10h1v1h-1zM10 10h1v1h-1zM11 10h1v1h-1zM13 10h1v1h-1zM15 10h1v1h-1zM9 11h1v1h-1zM12 11h1v1h-1zM14 11h1v1h-1zM30 11h1v1h-1zM0 12h1v1h-1zM5 12h1v1h-1zM13 12h1v1h-1zM14 12h1v1h-1zM17 12h1v1h-1zM19 12h1v1h-1zM25 12h1v1h-1zM28 12h1v1h-1zM15 13h1v1h-1zM19 13h1v1h-1zM27 13h1v1h-1zM28 13h1v1h-1zM1 14h1v1h-1zM10 14h1v1h-1zM18 14h1v1h-1zM19 14h1v1h-1zM28 14h1v1h-1zM4 15h1v1h-1zM18 15h1v1h-1zM19 15h1v1h-1zM24 15h1v1h-1zM2 16h1v1h-1zM12 16h1v1h-1zM18 16h1v1h-1zM20 16h1v1h-1zM0 17h1v1h-1zM1 17h1v1h-1zM10 17h1v1h-1zM13 17h1v1h-1zM12 18h1v1h-1zM25 18h1v1h-1zM26 18h1v1h-1zM13 19h1v1h-1zM15 19h1v1h-1zM16 19h1v1h-1zM18 19h1v1h-1zM22 19h1v1h-1zM25 19h1v1h-1zM27 19h1v1h-1zM10 20h1v1h-1zM12 20h1v1h-1zM23 20h1v1h-1zM28 20h1v1h-1zM29 20h1v1h-1zM5 21h1v1h-1zM15 21h1v1h-1zM0 22h1v1h-1zM18 22h1v1h-1zM20 22h1v1h-1zM7 23h1v1h-1zM12 23h1v1h-1zM14 23h1v1h-1zM18 23h1v1h-1zM2 24h1v1h-1zM7 24h1v1h-1zM13 24h1v1h-1zM25 24h1v1h-1zM27 24h1v1h-1zM28 24h1v1h-1zM30 24h1v1h-1zM8 25h1v1h-1zM21 25h1v1h-1zM0 26h1v1h-1zM7 26h1v1h-1zM16 26h1v1h-1zM18 26h1v1h-1zM26 26h1v1h-1zM27 26h1v1h-1zM0 27h1v1h-1zM4 27h1v1h-1zM10 27h1v1h-1zM11 27h1v1h-1zM21 27h1v1h-1zM24 27h1v1h-1zM1 28h1v1h-1zM11 28h1v1h-1zM27 28h1v1h-1zM30 28h1v1h-1zM31 28h1v1h-1zM3 29h1v1h-1zM7 29h1v1h-1zM28 29h1v1h-1zM29 29h1v1h-1zM11 30h1v1h-1zM13 30h1v1h-1zM26 30h1v1h-1zM29 30h1v1h-1zM8 31h1v1h-1zM18 31h1v1h-1zM20 31h1v1h-1zM26 31h1v1h-1zM4 32h1v1h-1zM10 33h1v1h-1zM16 33h1v1h-1zM17 33h1v1h-1zM22 33h1v1h-1zM23 33h1v1h-1zM1 34h1v1h-1zM7 34h1v1h-1zM23 34h1v1h-1zM26 34h1v1h-1zM28 34h1v1h-1zM5 35h1v1h-1zM15 35h1v1h-1zM30 35h1v1h-1zM3 36h1v1h-1zM8 36h1v1h-1zM21 36h1v1h-1zM1 37h1v1h-1zM9 37h1v1h-1zM18 37h1v1h-1zM19 37h1v1h-1zM7 38h1v1h-1zM15 38h1v1h-1zM24 38h1v1h-1zM0 39h1v1h-1zM7 39h1v1h-1zM19 39h1v1h-1zM5 40h1v1h-1zM10 40h1v1h-1zM16 40h1v1h-1zM23 40h1v1h-1zM29 40h1v1h-1zM3 41h1v1h-1zM8 41h1v1h-1zM10 41h1v1h-1zM11 41h1v1h-1zM9 42h1v1h-1zM15 42h1v1h-1zM20 42h1v1h-1zM6 43h1v1h-1zM23 43h1v1h-1zM25 43h1v1h-1zM1 44h1v1h-1zM4 44h1v1h-1zM18 44h1v1h-1zM20 44h1v1h-1zM23 44h1v1h-1zM29 44h1v1h-1zM1 45h1v1h-1zM7 45h1v1h-1zM18 45h1v1h-1zM23 45h1v1h-1zM0 46h1v1h-1zM2 46h1v1h-1zM11 46h1v1h-1zM27 46h1v1h-1zM21 47h1v1h-1zM24 47h1v1h-1zM12 48h1v1h-1zM15 49h1v1h-1zM16 49h1v1h-1zM18 49h1v1h-1zM15 50h1v1h-1zM23 50h1v1h-1zM9 51h1v1h-1zM11 52h1v1h-1zM15 52h1v1h-1zM28 52h1v1h-1zM30 52h1v1h-1zM19 53h1v1h-1zM20 53h1v1h-1zM25 53h1v1h-1zM7 54h1v1h-1zM21 54h1v1h-1zM27 54h1v1h-1zM24 55h1v1h-1zM0 56h1v1h-1zM1 56h1v1h-1zM3 56h1v1h-1zM7 56h1v1h-1zM13 56h1v1h-1zM14 56h1v1h-1zM18 56h1v1h-1zM26 56h1v1h-1zM6 57h1v1h-1zM7 57h1v1h-1zM8 57h1v1h-1zM10 57h1v1h-1zM17 57h1v1h-1zM23 57h1v1h-1zM28 57h1v1h-1zM29 57h1v1h-1zM8 58h1v1h-1zM12 58h1v1h-1zM16 58h1v1h-1zM25 58h1v1h-1zM28 58h1v1h-1zM12 59h1v1h-1zM14 59h1v1h-1zM17 59h1v1h-1zM8 60h1v1h-1zM11 60h1v1h-1zM14 60h1v1h-1zM26 60h1v1h-1zM31 60h1v1h-1zM11 61h1v1h-1zM12 61h1v1h-1zM22 61h1v1h-1zM5 62h1v1h-1zM6 62h1v1h-1zM11 63h1v1h-1zM13 63h1v1h-1zM14 63h1v1h-1zM18 63h1v1h-1zM25 63h1v1h-1zM0 64h1v1h-1zM10 64h1v1h-1zM15 64h1v1h-1zM16 64h1v1h-1zM17 64h1v1h-1zM20 64h1v1h-1zM21 64h1v1h-1zM26 64h1v1h-1zM2 65h1v1h-1zM12 65h1v1h-1zM23 65h1v1h-1zM24 65h1v1h-1zM6 66h1v1h-1zM29 66h1v1h-1zM31 66h1v1h-1zM5 67h1v1h-1zM22 67h1v1h-1zM23 67h1v1h-1zM27 67h1v1h-1zM8 68h1v1h-1zM24 68h1v1h-1zM5 69h1v1h-1zM13 69h1v1h-1zM17 69h1v1h-1zM7 70h1v1h-1zM9 70h1v1h-1zM21 70h1v1h-1zM30 70h1v1h-1zM31 70h1v1h-1zM3 71h1v1h-1zM10 71h1v1h-1zM21 71h1v1h-1zM15 72h1v1h-1zM24 72h1v1h-1zM25 72h1v1h-1zM2 73h1v1h-1zM13 73h1v1h-1zM20 73h1v1h-1zM25 73h1v1h-1zM2 74h1v1h-1zM6 74h1v1h-1zM15 74h1v1h-1zM25 74h1v1h-1zM27 74h1v1h-1zM28 74h1v1h-1zM13 75h1v1h-1zM17 75h1v1h-1zM30 75h1v1h-1zM4 76h1v1h-1zM5 76h1v1h-1zM7 76h1v1h-1zM10 76h1v1h-1zM17 76h1v1h-1zM27 76h1v1h-1zM7 77h1v1h-1zM10 77h1v1h-1zM12 77h1v1h-1zM21 77h1v1h-1zM0 78h1v1h-1zM6 78h1v1h-1zM7 78h1v1h-1zM0 79h1v1h-1zM28 79h1v1h-1zM1 80h1v1h-1zM5 80h1v1h-1zM8 80h1v1h-1zM15 80h1v1h-1zM29 80h1v1h-1zM2 82h1v1h-1zM3 82h1v1h-1zM18 82h1v1h-1zM24 82h1v1h-1zM5 83h1v1h-1zM16 83h1v1h-1zM22 83h1v1h-1zM26 83h1v1h-1zM31 83h1v1h-1zM5 84h1v1h-1zM6 84h1v1h-1zM25 84h1v1h-1zM26 84h1v1h-1zM13 85h1v1h-1zM15 85h1v1h-1zM0 86h1v1h-1zM9 86h1v1h-1zM10 86h1v1h-1zM15 86h1v1h-1zM28 86h1v1h-1zM31 86h1v1h-1zM0 87h1v1h-1zM4 87h1v1h-1zM31 87h1v1h-1zM28 88h1v1h-1zM0 89h1v1h-1zM3 89h1v1h-1zM9 89h1v1h-1zM27 89h1v1h-1zM31 89h1v1h-1zM9 90h1v1h-1zM18 90h1v1h-1zM0 91h1v1h-1zM16 91h1v1h-1zM8 92h1v1h-1zM10 92h1v1h-1zM20 92h1v1h-1zM25 92h1v1h-1zM31 92h1v1h-1zM11 93h1v1h-1zM15 93h1v1h-1zM25 93h1v1h-1zM27 93h1v1h-1zM8 94h1v1h-1zM1 95h1v1h-1zM20 95h1v1h-1zM21 95h1v1h-1zM22 95h1v1h-1zM23 95h1v1h-1zM9 96h1v1h-1zM14 96h1v1h-1zM19 96h1v1h-1zM8 97h1v1h-1zM26 97h1v1h-1zM31 97h1v1h-1zM10 98h1v1h-1zM11 98h1v1h-1zM19 98h1v1h-1zM23 98h1v1h-1zM25 98h1v1h-1zM5 99h1v1h-1zM14 99h1v1h-1zM6 100h1v1h-1zM9 100h1v1h-1zM11 100h1v1h-1zM27 100h1v1h-1zM30 100h1v1h-1zM2 101h1v1h-1zM5 101h1v1h-1zM11 101h1v1h-1zM13 101h1v1h-1zM15 101h1v1h-1zM1 102h1v1h-1zM22 102h1v1h-1zM10 104h1v1h-1zM17 104h1v1h-1zM30 104h1v1h-1zM31 104h1v1h-1zM1 106h1v1h-1zM3 106h1v1h-1zM14 106h1v1h-1zM21 106h1v1h-1zM4 107h1v1h-1zM8 107h1v1h-1zM15 107h1v1h-1zM6 108h1v1h-1zM13 108h1v1h-1zM18 108h1v1h-1zM27 108h1v1h-1zM29 108h1v1h-1zM5 109h1v1h-1zM8 109h1v1h-1zM17 109h1v1h-1zM21 109h1v1h-1zM29 109h1v1h-1zM11 110h1v1h-1zM15 110h1v1h-1zM21 110h1v1h-1zM6 111h1v1h-1zM13 111h1v1h-1zM20 111h1v1h-1zM0 112h1v1h-1zM4 112h1v1h-1zM5 112h1v1h-1zM7 112h1v1h-1zM10 112h1v1h-1zM13 112h1v1h-1zM17 112h1v1h-1zM0 113h1v1h-1zM5 113h1v1h-1zM7 113h1v1h-1zM12 113h1v1h-1zM13 113h1v1h-1zM0 114h1v1h-1zM1 114h1v1h-1zM9 114h1v1h-1zM12 114h1v1h-1zM1 115h1v1h-1zM3 115h1v1h-1zM10 115h1v1h-1zM14 115h1v1h-1zM15 115h1v1h-1zM21 115h1v1h-1zM22 115h1v1h-1zM23 115h1v1h-1zM30 115h1v1h-1zM0 116h1v1h-1zM25 116h1v1h-1zM29 116h1v1h-1zM31 116h1v1h-1zM0 117h1v1h-1zM4 117h1v1h-1zM7 117h1v1h-1zM16 117h1v1h-1zM24 117h1v1h-1zM28 117h1v1h-1zM7 118h1v1h-1zM17 118h1v1h-1zM26 118h1v1h-1zM15 119h1v1h-1zM20 119h1v1h-1zM21 119h1v1h-1zM14 120h1v1h-1zM18 120h1v1h-1zM30 120h1v1h-1zM6 121h1v1h-1zM8 121h1v1h-1zM15 122h1v1h-1zM22 122h1v1h-1zM13 123h1v1h-1zM17 123h1v1h-1zM19 123h1v1h-1zM30 123h1v1h-1zM14 124h1v1h-1zM24 124h1v1h-1zM0 125h1v1h-1zM11 125h1v1h-1zM23 125h1v1h-1zM16 126h1v1h-1zM18 126h1v1h-1zM19 127h1v1h-1zM21 127h1v1h-1z"/><path fill="#ff3c00" d="M8 0h1v1h-1zM13 0h1v1h-1zM21 1h1v1h-1zM23 1h1v1h-1zM13 2h1v1h-1zM24 2h1v1h-1zM28 2h1v1h-1zM31 2h1v1h-1zM10 3h1v1h-1zM13 3h1v1h-1zM27 3h1v1h-1zM4 4h1v1h-1zM11 4h1v1h-1zM0 5h1v1h-1zM3 5h1v1h-1zM4 5h1v1h-1zM20 5h1v1h-1zM24 5h1v1h-1zM28 5h1v1h-1zM14 6h1v1h-1zM18 6h1v1h-1zM1 7h1v1h-1zM9 7h1v1h-1zM13 7h1v1h-1zM17 7h1v1h-1zM21 7h1v1h-1zM25 7h1v1h-1zM3 8h1v1h-1zM7 8h1v1h-1zM10 8h1v1h-1zM11 8h1v1h-1zM13 8h1v1h-1zM18 8h1v1h-1zM4 9h1v1h-1zM12 9h1v1h-1zM25 9h1v1h-1zM29 9h1v1h-1zM2 10h1v1h-1zM17 10h1v1h-1zM29 10h1v1h-1zM1 11h1v1h-1zM3 11h1v1h-1zM17 11h1v1h-1zM29 11h1v1h-1zM21 12h1v1h-1zM22 12h1v1h-1zM27 12h1v1h-1zM29 12h1v1h-1zM5 13h1v1h-1zM6 13h1v1h-1zM12 13h1v1h-1zM14 13h1v1h-1zM6 14h1v1h-1zM7 14h1v1h-1zM16 16h1v1h-1zM17 16h1v1h-1zM17 17h1v1h-1zM25 17h1v1h-1zM18 18h1v1h-1zM7 19h1v1h-1zM2 20h1v1h-1zM8 20h1v1h-1zM9 21h1v1h-1zM12 21h1v1h-1zM29 21h1v1h-1zM4 22h1v1h-1zM15 22h1v1h-1zM19 22h1v1h-1zM24 22h1v1h-1zM30 22h1v1h-1zM0 23h1v1h-1zM11 23h1v1h-1zM20 23h1v1h-1zM25 23h1v1h-1zM29 23h1v1h-1zM0 25h1v1h-1zM5 25h1v1h-1zM20 25h1v1h-1zM25 25h1v1h-1zM24 26h1v1h-1zM30 26h1v1h-1zM9 27h1v1h-1zM16 27h1v1h-1zM27 27h1v1h-1zM30 27h1v1h-1zM7 28h1v1h-1zM17 28h1v1h-1zM29 28h1v1h-1zM2 29h1v1h-1zM4 29h1v1h-1zM12 29h1v1h-1zM25 29h1v1h-1zM27 30h1v1h-1zM28 30h1v1h-1zM14 31h1v1h-1zM22 31h1v1h-1zM1 32h1v1h-1zM10 32h1v1h-1zM12 32h1v1h-1zM13 32h1v1h-1zM16 32h1v1h-1zM20 33h1v1h-1zM3 34h1v1h-1zM3 35h1v1h-1zM27 36h1v1h-1zM12 37h1v1h-1zM15 37h1v1h-1zM22 37h1v1h-1zM1 38h1v1h-1zM2 38h1v1h-1zM10 38h1v1h-1zM12 38h1v1h-1zM1 39h1v1h-1zM11 39h1v1h-1zM13 39h1v1h-1zM25 39h1v1h-1zM26 39h1v1h-1zM6 40h1v1h-1zM11 40h1v1h-1zM14 40h1v1h-1zM15 40h1v1h-1zM19 40h1v1h-1zM25 40h1v1h-1zM2 41h1v1h-1zM15 41h1v1h-1zM20 41h1v1h-1zM21 41h1v1h-1zM23 41h1v1h-1zM24 41h1v1h-1zM2 42h1v1h-1zM8 42h1v1h-1zM28 42h1v1h-1zM0 43h1v1h-1zM1 43h1v1h-1zM13 43h1v1h-1zM19 43h1v1h-1zM20 43h1v1h-1zM12 44h1v1h-1zM26 45h1v1h-1zM7 46h1v1h-1zM15 47h1v1h-1zM19 47h1v1h-1zM1 48h1v1h-1zM8 48h1v1h-1zM10 48h1v1h-1zM4 49h1v1h-1zM9 49h1v1h-1zM11 49h1v1h-1zM20 49h1v1h-1zM22 49h1v1h-1zM7 50h1v1h-1zM2 51h1v1h-1zM7 51h1v1h-1zM23 51h1v1h-1zM1 52h1v1h-1zM3 52h1v1h-1zM8 52h1v1h-1zM12 52h1v1h-1zM16 52h1v1h-1zM20 52h1v1h-1zM9 53h1v1h-1zM14 53h1v1h-1zM23 53h1v1h-1zM28 53h1v1h-1zM31 53h1v1h-1zM8 54h1v1h-1zM16 54h1v1h-1zM15 55h1v1h-1zM19 56h1v1h-1zM22 56h1v1h-1zM5 57h1v1h-1zM11 57h1v1h-1zM11 58h1v1h-1zM10 59h1v1h-1zM19 59h1v1h-1zM26 59h1v1h-1zM1 60h1v1h-1zM4 61h1v1h-1zM5 61h1v1h-1zM19 61h1v1h-1zM24 61h1v1h-1zM31 61h1v1h-1zM12 62h1v1h-1zM26 62h1v1h-1zM30 62h1v1h-1zM31 62h1v1h-1zM9 63h1v1h-1zM12 63h1v1h-1zM29 63h1v1h-1zM30 63h1v1h-1zM12 64h1v1h-1zM21 65h1v1h-1zM29 65h1v1h-1zM30 65h1v1h-1zM31 65h1v1h-1zM2 66h1v1h-1zM4 66h1v1h-1zM9 66h1v1h-1zM23 66h1v1h-1zM28 66h1v1h-1zM6 67h1v1h-1zM11 67h1v1h-1zM20 67h1v1h-1zM3 68h1v1h-1zM6 68h1v1h-1zM31 69h1v1h-1zM10 70h1v1h-1zM23 70h1v1h-1zM28 70h1v1h-1zM18 71h1v1h-1zM31 71h1v1h-1zM4 72h1v1h-1zM8 72h1v1h-1zM9 72h1v1h-1zM11 72h1v1h-1zM19 72h1v1h-1zM31 72h1v1h-1zM15 73h1v1h-1zM16 73h1v1h-1zM28 73h1v1h-1zM0 74h1v1h-1zM16 74h1v1h-1zM8 75h1v1h-1zM20 75h1v1h-1zM24 75h1v1h-1zM25 75h1v1h-1zM8 76h1v1h-1zM15 76h1v1h-1zM23 76h1v1h-1zM26 76h1v1h-1zM16 77h1v1h-1zM18 77h1v1h-1zM25 77h1v1h-1zM13 78h1v1h-1zM20 78h1v1h-1zM29 78h1v1h-1zM3 79h1v1h-1zM9 79h1v1h-1zM3 80h1v1h-1zM10 80h1v1h-1zM22 80h1v1h-1zM23 80h1v1h-1zM15 81h1v1h-1zM19 81h1v1h-1zM22 81h1v1h-1zM24 81h1v1h-1zM28 81h1v1h-1zM17 82h1v1h-1zM30 82h1v1h-1zM10 83h1v1h-1zM18 83h1v1h-1zM20 83h1v1h-1zM27 83h1v1h-1zM6 85h1v1h-1zM25 85h1v1h-1zM28 85h1v1h-1zM7 86h1v1h-1zM8 86h1v1h-1zM2 87h1v1h-1zM12 87h1v1h-1zM17 87h1v1h-1zM6 89h1v1h-1zM25 89h1v1h-1zM5 90h1v1h-1zM7 90h1v1h-1zM23 90h1v1h-1zM26 90h1v1h-1zM14 91h1v1h-1zM6 92h1v1h-1zM7 92h1v1h-1zM9 92h1v1h-1zM12 92h1v1h-1zM17 92h1v1h-1zM18 92h1v1h-1zM28 93h1v1h-1zM8 95h1v1h-1zM12 95h1v1h-1zM25 96h1v1h-1zM3 97h1v1h-1zM7 97h1v1h-1zM13 97h1v1h-1zM13 98h1v1h-1zM31 98h1v1h-1zM3 99h1v1h-1zM6 99h1v1h-1zM10 99h1v1h-1zM28 99h1v1h-1zM12 100h1v1h-1zM20 101h1v1h-1zM24 101h1v1h-1zM29 101h1v1h-1zM0 102h1v1h-1zM13 102h1v1h-1zM5 103h1v1h-1zM8 103h1v1h-1zM21 103h1v1h-1zM22 103h1v1h-1zM23 103h1v1h-1zM25 103h1v1h-1zM0 104h1v1h-1zM8 104h1v1h-1zM9 104h1v1h-1zM11 104h1v1h-1zM15 104h1v1h-1zM0 105h1v1h-1zM24 105h1v1h-1zM16 106h1v1h-1zM19 106h1v1h-1zM30 106h1v1h-1zM2 107h1v1h-1zM2 108h1v1h-1zM25 108h1v1h-1zM30 108h1v1h-1zM19 109h1v1h-1zM20 109h1v1h-1zM22 109h1v1h-1zM31 109h1v1h-1zM6 110h1v1h-1zM24 110h1v1h-1zM25 110h1v1h-1zM29 110h1v1h-1zM18 111h1v1h-1zM19 111h1v1h-1zM27 111h1v1h-1zM31 111h1v1h-1zM3 112h1v1h-1zM8 112h1v1h-1zM11 113h1v1h-1zM23 113h1v1h-1zM26 113h1v1h-1zM2 114h1v1h-1zM14 114h1v1h-1zM24 114h1v1h-1zM16 115h1v1h-1zM18 116h1v1h-1zM23 117h1v1h-1zM26 117h1v1h-1zM4 118h1v1h-1zM22 118h1v1h-1zM2 119h1v1h-1zM6 119h1v1h-1zM8 119h1v1h-1zM16 119h1v1h-1zM18 119h1v1h-1zM19 119h1v1h-1zM13 120h1v1h-1zM9 121h1v1h-1zM30 121h1v1h-1zM29 122h1v1h-1zM9 123h1v1h-1zM10 123h1v1h-1zM15 123h1v1h-1zM18 123h1v1h-1zM29 123h1v1h-1zM13 124h1v1h-1zM28 124h1v1h-1zM1 125h1v1h-1zM7 125h1v1h-1zM24 125h1v1h-1zM25 125h1v1h-1zM1 126h1v1h-1zM6 126h1v1h-1zM26 126h1v1h-1zM9 127h1v1h-1zM15 127h1v1h-1z"/><path fill="#ff5500" d="M6 0h1v1h-1zM29 0h1v1h-1zM7 1h1v1h-1zM13 1h1v1h-1zM2 2h1v1h-1zM14 2h1v1h-1zM23 2h1v1h-1zM7 3h1v1h-1zM20 3h1v1h-1zM22 3h1v1h-1zM26 3h1v1h-1zM10 5h1v1h-1zM12 5h1v1h-1zM17 5h1v1h-1zM8 6h1v1h-1zM21 6h1v1h-1zM28 6h1v1h-1zM15 7h1v1h-1zM8 9h1v1h-1zM13 9h1v1h-1zM7 10h1v1h-1zM20 10h1v1h-1zM0 13h1v1h-1zM11 13h1v1h-1zM2 14h1v1h-1zM21 14h1v1h-1zM6 16h1v1h-1zM8 16h1v1h-1zM15 16h1v1h-1zM22 16h1v1h-1zM28 16h1v1h-1zM14 17h1v1h-1zM21 17h1v1h-1zM30 17h1v1h-1zM2 18h1v1h-1zM10 21h1v1h-1zM8 24h1v1h-1zM16 24h1v1h-1zM21 24h1v1h-1zM12 25h1v1h-1zM8 26h1v1h-1zM22 26h1v1h-1zM28 26h1v1h-1zM13 27h1v1h-1zM31 27h1v1h-1zM5 28h1v1h-1zM19 28h1v1h-1zM22 28h1v1h-1zM26 28h1v1h-1zM14 29h1v1h-1zM21 29h1v1h-1zM0 30h1v1h-1zM16 30h1v1h-1zM6 32h1v1h-1zM26 32h1v1h-1zM29 32h1v1h-1zM25 33h1v1h-1zM2 34h1v1h-1zM4 34h1v1h-1zM18 34h1v1h-1zM24 34h1v1h-1zM29 34h1v1h-1zM25 36h1v1h-1zM8 37h1v1h-1zM11 37h1v1h-1zM8 38h1v1h-1zM17 38h1v1h-1zM28 38h1v1h-1zM10 39h1v1h-1zM31 39h1v1h-1zM9 41h1v1h-1zM7 42h1v1h-1zM21 42h1v1h-1zM26 42h1v1h-1zM30 42h1v1h-1zM9 43h1v1h-1zM28 43h1v1h-1zM2 44h1v1h-1zM3 44h1v1h-1zM11 44h1v1h-1zM31 44h1v1h-1zM10 45h1v1h-1zM0 47h1v1h-1zM3 48h1v1h-1zM14 48h1v1h-1zM18 48h1v1h-1zM14 49h1v1h-1zM26 49h1v1h-1zM10 51h1v1h-1zM13 51h1v1h-1zM17 51h1v1h-1zM27 51h1v1h-1zM21 53h1v1h-1zM30 53h1v1h-1zM3 55h1v1h-1zM16 56h1v1h-1zM21 56h1v1h-1zM2 57h1v1h-1zM6 59h1v1h-1zM20 59h1v1h-1zM24 59h1v1h-1zM25 59h1v1h-1zM31 59h1v1h-1zM2 60h1v1h-1zM18 60h1v1h-1zM24 60h1v1h-1zM8 61h1v1h-1zM21 61h1v1h-1zM26 61h1v1h-1zM10 62h1v1h-1zM29 62h1v1h-1zM0 63h1v1h-1zM3 63h1v1h-1zM27 63h1v1h-1zM23 64h1v1h-1zM2 67h1v1h-1zM16 67h1v1h-1zM18 67h1v1h-1zM7 69h1v1h-1zM18 70h1v1h-1zM19 70h1v1h-1zM29 70h1v1h-1zM7 71h1v1h-1zM7 72h1v1h-1zM16 72h1v1h-1zM17 72h1v1h-1zM4 74h1v1h-1zM5 74h1v1h-1zM18 74h1v1h-1zM3 75h1v1h-1zM4 75h1v1h-1zM31 75h1v1h-1zM22 76h1v1h-1zM24 76h1v1h-1zM0 77h1v1h-1zM13 77h1v1h-1zM14 77h1v1h-1zM27 77h1v1h-1zM14 79h1v1h-1zM21 79h1v1h-1zM22 79h1v1h-1zM0 80h1v1h-1zM13 80h1v1h-1zM21 80h1v1h-1zM5 81h1v1h-1zM8 81h1v1h-1zM16 81h1v1h-1zM22 82h1v1h-1zM23 82h1v1h-1zM25 82h1v1h-1zM0 84h1v1h-1zM11 84h1v1h-1zM13 84h1v1h-1zM20 84h1v1h-1zM28 84h1v1h-1zM30 85h1v1h-1zM5 86h1v1h-1zM1 87h1v1h-1zM14 87h1v1h-1zM22 87h1v1h-1zM2 89h1v1h-1zM16 89h1v1h-1zM24 89h1v1h-1zM26 89h1v1h-1zM29 89h1v1h-1zM30 89h1v1h-1zM1 90h1v1h-1zM2 90h1v1h-1zM15 90h1v1h-1zM16 90h1v1h-1zM27 90h1v1h-1zM3 91h1v1h-1zM15 91h1v1h-1zM11 92h1v1h-1zM13 92h1v1h-1zM22 92h1v1h-1zM28 92h1v1h-1zM8 93h1v1h-1zM13 93h1v1h-1zM23 93h1v1h-1zM13 94h1v1h-1zM25 94h1v1h-1zM2 95h1v1h-1zM17 95h1v1h-1zM13 96h1v1h-1zM20 97h1v1h-1zM22 97h1v1h-1zM12 99h1v1h-1zM26 99h1v1h-1zM20 100h1v1h-1zM31 101h1v1h-1zM10 102h1v1h-1zM18 103h1v1h-1zM20 103h1v1h-1zM28 103h1v1h-1zM13 105h1v1h-1zM15 106h1v1h-1zM18 106h1v1h-1zM26 106h1v1h-1zM28 106h1v1h-1zM6 107h1v1h-1zM23 107h1v1h-1zM1 108h1v1h-1zM4 108h1v1h-1zM24 108h1v1h-1zM6 109h1v1h-1zM14 109h1v1h-1zM26 109h1v1h-1zM28 109h1v1h-1zM1 110h1v1h-1zM16 110h1v1h-1zM6 113h1v1h-1zM15 114h1v1h-1zM25 114h1v1h-1zM12 115h1v1h-1zM27 115h1v1h-1zM4 116h1v1h-1zM25 117h1v1h-1zM31 118h1v1h-1zM6 120h1v1h-1zM28 120h1v1h-1zM10 121h1v1h-1zM11 121h1v1h-1zM6 122h1v1h-1zM9 124h1v1h-1zM11 124h1v1h-1zM21 124h1v1h-1zM12 125h1v1h-1zM12 126h1v1h-1zM5 127h1v1h-1zM6 127h1v1h-1zM7 127h1v1h-1z"/><path fill="#ff6d00" d="M27 0h1v1h-1zM24 1h1v1h-1zM6 2h1v1h-1zM18 2h1v1h-1zM1 3h1v1h-1zM14 3h1v1h-1zM5 5h1v1h-1zM23 5h1v1h-1zM10 6h1v1h-1zM15 6h1v1h-1zM17 6h1v1h-1zM26 6h1v1h-1zM29 6h1v1h-1zM30 6h1v1h-1zM4 7h1v1h-1zM18 7h1v1h-1zM19 7h1v1h-1zM12 10h1v1h-1zM0 11h1v1h-1zM9 12h1v1h-1zM16 12h1v1h-1zM20 12h1v1h-1zM20 14h1v1h-1zM4 17h1v1h-1zM8 17h1v1h-1zM20 17h1v1h-1zM17 18h1v1h-1zM0 20h1v1h-1zM7 20h1v1h-1zM16 20h1v1h-1zM22 20h1v1h-1zM16 21h1v1h-1zM9 22h1v1h-1zM26 22h1v1h-1zM17 23h1v1h-1zM23 23h1v1h-1zM11 24h1v1h-1zM14 24h1v1h-1zM9 25h1v1h-1zM9 26h1v1h-1zM3 27h1v1h-1zM11 32h1v1h-1zM30 33h1v1h-1zM8 34h1v1h-1zM14 34h1v1h-1zM22 34h1v1h-1zM19 35h1v1h-1zM29 35h1v1h-1zM31 36h1v1h-1zM5 38h1v1h-1zM3 39h1v1h-1zM12 39h1v1h-1zM29 39h1v1h-1zM7 40h1v1h-1zM30 40h1v1h-1zM1 41h1v1h-1zM29 42h1v1h-1zM11 43h1v1h-1zM27 43h1v1h-1zM26 44h1v1h-1zM8 45h1v1h-1zM11 45h1v1h-1zM21 45h1v1h-1zM24 45h1v1h-1zM3 46h1v1h-1zM13 47h1v1h-1zM6 48h1v1h-1zM2 50h1v1h-1zM6 50h1v1h-1zM14 50h1v1h-1zM28 50h1v1h-1zM1 51h1v1h-1zM3 51h1v1h-1zM11 51h1v1h-1zM18 51h1v1h-1zM29 52h1v1h-1zM5 53h1v1h-1zM8 53h1v1h-1zM14 54h1v1h-1zM1 55h1v1h-1zM3 57h1v1h-1zM17 58h1v1h-1zM15 59h1v1h-1zM29 59h1v1h-1zM15 61h1v1h-1zM8 62h1v1h-1zM19 63h1v1h-1zM7 64h1v1h-1zM18 64h1v1h-1zM14 66h1v1h-1zM5 68h1v1h-1zM15 68h1v1h-1zM29 71h1v1h-1zM20 72h1v1h-1zM22 72h1v1h-1zM26 72h1v1h-1zM6 73h1v1h-1zM7 73h1v1h-1zM24 74h1v1h-1zM27 75h1v1h-1zM11 76h1v1h-1zM20 76h1v1h-1zM8 77h1v1h-1zM17 77h1v1h-1zM25 78h1v1h-1zM27 79h1v1h-1zM12 80h1v1h-1zM2 81h1v1h-1zM4 81h1v1h-1zM29 81h1v1h-1zM31 81h1v1h-1zM12 82h1v1h-1zM13 82h1v1h-1zM27 82h1v1h-1zM11 83h1v1h-1zM31 84h1v1h-1zM7 87h1v1h-1zM17 90h1v1h-1zM6 94h1v1h-1zM9 95h1v1h-1zM10 97h1v1h-1zM12 98h1v1h-1zM18 98h1v1h-1zM22 98h1v1h-1zM5 100h1v1h-1zM10 101h1v1h-1zM7 103h1v1h-1zM9 103h1v1h-1zM31 103h1v1h-1zM29 104h1v1h-1zM29 105h1v1h-1zM22 106h1v1h-1zM10 107h1v1h-1zM15 108h1v1h-1zM25 109h1v1h-1zM4 111h1v1h-1zM25 112h1v1h-1zM20 113h1v1h-1zM18 114h1v1h-1zM2 116h1v1h-1zM1 117h1v1h-1zM5 117h1v1h-1zM10 117h1v1h-1zM31 117h1v1h-1zM5 118h1v1h-1zM8 118h1v1h-1zM3 120h1v1h-1zM7 120h1v1h-1zM27 120h1v1h-1zM4 121h1v1h-1zM7 121h1v1h-1zM12 121h1v1h-1zM2 123h1v1h-1zM20 123h1v1h-1zM22 123h1v1h-1zM24 123h1v1h-1zM0 124h1v1h-1zM3 124h1v1h-1zM8 124h1v1h-1zM8 125h1v1h-1zM26 125h1v1h-1zM29 125h1v1h-1z"/><path fill="#ff8600" d="M6 4h1v1h-1zM14 4h1v1h-1zM0 8h1v1h-1zM16 9h1v1h-1zM22 9h1v1h-1zM21 10h1v1h-1zM2 11h1v1h-1zM0 14h1v1h-1zM3 17h1v1h-1zM29 17h1v1h-1zM28 19h1v1h-1zM13 26h1v1h-1zM7 32h1v1h-1zM21 32h1v1h-1zM31 33h1v1h-1zM4 35h1v1h-1zM8 35h1v1h-1zM26 36h1v1h-1zM30 36h1v1h-1zM14 37h1v1h-1zM16 37h1v1h-1zM0 41h1v1h-1zM4 41h1v1h-1zM15 43h1v1h-1zM31 43h1v1h-1zM4 45h1v1h-1zM6 45h1v1h-1zM27 45h1v1h-1zM20 46h1v1h-1zM4 50h1v1h-1zM5 50h1v1h-1zM28 51h1v1h-1zM14 52h1v1h-1zM0 55h1v1h-1zM16 55h1v1h-1zM20 56h1v1h-1zM13 57h1v1h-1zM15 57h1v1h-1zM16 57h1v1h-1zM0 60h1v1h-1zM13 60h1v1h-1zM25 66h1v1h-1zM12 67h1v1h-1zM6 69h1v1h-1zM12 69h1v1h-1zM20 69h1v1h-1zM23 69h1v1h-1zM3 70h1v1h-1zM9 71h1v1h-1zM5 72h1v1h-1zM23 75h1v1h-1zM2 78h1v1h-1zM12 79h1v1h-1zM26 81h1v1h-1zM16 85h1v1h-1zM23 89h1v1h-1zM1 91h1v1h-1zM11 91h1v1h-1zM21 91h1v1h-1zM27 91h1v1h-1zM5 92h1v1h-1zM26 98h1v1h-1zM3 100h1v1h-1zM12 101h1v1h-1zM1 103h1v1h-1zM19 104h1v1h-1zM6 106h1v1h-1zM13 107h1v1h-1zM26 107h1v1h-1zM26 108h1v1h-1zM9 110h1v1h-1zM10 110h1v1h-1zM22 110h1v1h-1zM9 111h1v1h-1zM3 113h1v1h-1zM27 113h1v1h-1zM11 114h1v1h-1zM20 115h1v1h-1zM29 115h1v1h-1zM31 115h1v1h-1zM15 116h1v1h-1zM16 116h1v1h-1zM18 117h1v1h-1zM20 120h1v1h-1zM14 121h1v1h-1zM0 127h1v1h-1zM2 127h1v1h-1zM3 127h1v1h-1zM13 127h1v1h-1z"/><path fill="#ff9e00" d="M28 10h1v1h-1zM4 16h1v1h-1zM13 16h1v1h-1zM25 16h1v1h-1zM23 17h1v1h-1zM27 18h1v1h-1zM25 20h1v1h-1zM11 22h1v1h-1zM1 23h1v1h-1zM22 24h1v1h-1zM16 25h1v1h-1zM3 28h1v1h-1zM8 28h1v1h-1zM14 28h1v1h-1zM10 31h1v1h-1zM17 34h1v1h-1zM11 36h1v1h-1zM5 39h1v1h-1zM14 43h1v1h-1zM12 56h1v1h-1zM15 56h1v1h-1zM14 57h1v1h-1zM25 57h1v1h-1zM26 57h1v1h-1zM28 61h1v1h-1zM11 71h1v1h-1zM7 74h1v1h-1zM10 79h1v1h-1zM23 83h1v1h-1zM6 91h1v1h-1zM10 91h1v1h-1zM12 91h1v1h-1zM27 94h1v1h-1zM29 95h1v1h-1zM7 101h1v1h-1zM25 102h1v1h-1zM29 103h1v1h-1zM22 104h1v1h-1zM5 106h1v1h-1zM1 109h1v1h-1zM15 109h1v1h-1zM11 112h1v1h-1zM12 117h1v1h-1zM18 118h1v1h-1zM25 120h1v1h-1zM11 123h1v1h-1zM27 124h1v1h-1z"/><path fill="#ffb700" d="M24 4h1v1h-1zM19 9h1v1h-1zM6 10h1v1h-1zM31 12h1v1h-1zM3 13h1v1h-1zM21 22h1v1h-1zM15 25h1v1h-1zM8 29h1v1h-1zM15 31h1v1h-1zM20 32h1v1h-1zM9 44h1v1h-1zM14 45h1v1h-1zM5 47h1v1h-1zM25 50h1v1h-1zM22 51h1v1h-1zM31 67h1v1h-1zM9 85h1v1h-1zM21 92h1v1h-1zM5 94h1v1h-1zM28 111h1v1h-1z"/><path fill="#ffcc00" d="M26 5h1v1h-1zM30 18h1v1h-1zM6 54h1v1h-1zM10 55h1v1h-1zM5 64h1v1h-1zM2 92h1v1h-1zM0 99h1v1h-1zM8 102h1v1h-1zM11 120h1v1h-1z"/><path fill="#ffe100" d="M13 90h1v1h-1z"/>
</g>
<line x1="72.00" y1="1" x2="72.00" y2="281" stroke="#808890" stroke-width="1.3" stroke-dasharray="7,1" opacity=".7"/>
<line x1="143.00" y1="1" x2="143.00" y2="281" stroke="#808890" stroke-width="1.3" stroke-dasharray="7,1" opacity=".7"/>
<line x1="214.00" y1="1" x2="214.00" y2="281" stroke="#808890" stroke-width="1.3" stroke-dasharray="7,1" opacity=".7"/>
<line x1="285.00" y1="1" x2="285.00" y2="281" stroke="#808890" stroke-width="1.3" stroke-dasharray="7,1" opacity=".7"/>
<line x1="1" y1="1.20" x2="285" y2="1.20" stroke="#808890" stroke-width="1.3" stroke-dasharray="6,1" opacity=".5"/>
<line x1="1" y1="36.00" x2="285" y2="36.00" stroke="#808890" stroke-width="1.3" stroke-dasharray="6,1" opacity=".5"/>
<line x1="1" y1="71.00" x2="285" y2="71.00" stroke="#808890" stroke-width="1.3" stroke-dasharray="6,1" opacity=".5"/>
<line x1="1" y1="106.00" x2="285" y2="106.00" stroke="#808890" stroke-width="1.3" stroke-dasharray="6,1" opacity=".5"/>
<line x1="1" y1="141.00" x2="285" y2="141.00" stroke="#808890" stroke-width="1.3" stroke-dasharray="6,1" opacity=".5"/>
<line x1="1" y1="176.00" x2="285" y2="176.00" stroke="#808890" stroke-width="1.3" stroke-dasharray="6,1" opacity=".5"/>
<line x1="1" y1="211.00" x2="285" y2="211.00" stroke="#808890" stroke-width="1.3" stroke-dasharray="6,1" opacity=".5"/>
<line x1="1" y1="246.00" x2="285" y2="246.00" stroke="#808890" stroke-width="1.3" stroke-dasharray="6,1" opacity=".5"/>
<rect x="1" y="0.50" width="7" height="1.6" fill="#7f8a92" opacity=".9"/>
<rect x="1" y="7.50" width="4" height="1.3" fill="#8a9298" opacity=".7"/>
<rect x="1" y="14.50" width="4" height="1.3" fill="#8a9298" opacity=".7"/>
<rect x="1" y="21.50" width="4" height="1.3" fill="#8a9298" opacity=".7"/>
<rect x="1" y="28.50" width="4" height="1.3" fill="#8a9298" opacity=".7"/>
<rect x="1" y="35.50" width="7" height="1.6" fill="#7f8a92" opacity=".9"/>
<rect x="1" y="42.50" width="4" height="1.3" fill="#8a9298" opacity=".7"/>
<rect x="1" y="49.50" width="4" height="1.3" fill="#8a9298" opacity=".7"/>
<rect x="1" y="56.50" width="4" height="1.3" fill="#8a9298" opacity=".7"/>
<rect x="1" y="63.50" width="4" height="1.3" fill="#8a9298" opacity=".7"/>
<rect x="1" y="70.50" width="7" height="1.6" fill="#7f8a92" opacity=".9"/>
<rect x="1" y="77.50" width="4" height="1.3" fill="#8a9298" opacity=".7"/>
<rect x="1" y="84.50" width="4" height="1.3" fill="#8a9298" opacity=".7"/>
<rect x="1" y="91.50" width="4" height="1.3" fill="#8a9298" opacity=".7"/>
<rect x="1" y="98.50" width="4" height="1.3" fill="#8a9298" opacity=".7"/>
<rect x="1" y="105.50" width="7" height="1.6" fill="#7f8a92" opacity=".9"/>
<rect x="1" y="112.50" width="4" height="1.3" fill="#8a9298" opacity=".7"/>
<rect x="1" y="119.50" width="4" height="1.3" fill="#8a9298" opacity=".7"/>
<rect x="1" y="126.50" width="4" height="1.3" fill="#8a9298" opacity=".7"/>
<rect x="1" y="133.50" width="4" height="1.3" fill="#8a9298" opacity=".7"/>
<rect x="1" y="140.50" width="7" height="1.6" fill="#7f8a92" opacity=".9"/>
<rect x="1" y="147.50" width="4" height="1.3" fill="#8a9298" opacity=".7"/>
<rect x="1" y="154.50" width="4" height="1.3" fill="#8a9298" opacity=".7"/>
<rect x="1" y="161.50" width="4" height="1.3" fill="#8a9298" opacity=".7"/>
<rect x="1" y="168.50" width="4" height="1.3" fill="#8a9298" opacity=".7"/>
<rect x="1" y="175.50" width="7" height="1.6" fill="#7f8a92" opacity=".9"/>
<rect x="1" y="182.50" width="4" height="1.3" fill="#8a9298" opacity=".7"/>
<rect x="1" y="189.50" width="4" height="1.3" fill="#8a9298" opacity=".7"/>
<rect x="1" y="196.50" width="4" height="1.3" fill="#8a9298" opacity=".7"/>
<rect x="1" y="203.50" width="4" height="1.3" fill="#8a9298" opacity=".7"/>
<rect x="1" y="210.50" width="7" height="1.6" fill="#7f8a92" opacity=".9"/>
<rect x="1" y="217.50" width="4" height="1.3" fill="#8a9298" opacity=".7"/>
<rect x="1" y="224.50" width="4" height="1.3" fill="#8a9298" opacity=".7"/>
<rect x="1" y="231.50" width="4" height="1.3" fill="#8a9298" opacity=".7"/>
<rect x="1" y="238.50" width="4" height="1.3" fill="#8a9298" opacity=".7"/>
<rect x="1" y="245.50" width="7" height="1.6" fill="#7f8a92" opacity=".9"/>
<rect x="1" y="252.50" width="4" height="1.3" fill="#8a9298" opacity=".7"/>
<rect x="1" y="259.50" width="4" height="1.3" fill="#8a9298" opacity=".7"/>
<rect x="1" y="266.50" width="4" height="1.3" fill="#8a9298" opacity=".7"/>
<rect x="1" y="273.50" width="4" height="1.3" fill="#8a9298" opacity=".7"/>
<rect x="1" y="280.50" width="7" height="1.6" fill="#7f8a92" opacity=".9"/>
<rect x="0.20" y="274" width="1.6" height="7" fill="#7f8a92" opacity=".9"/>
<rect x="14.60" y="277" width="1.3" height="4" fill="#8a9298" opacity=".7"/>
<rect x="28.80" y="277" width="1.3" height="4" fill="#8a9298" opacity=".7"/>
<rect x="43.00" y="277" width="1.3" height="4" fill="#8a9298" opacity=".7"/>
<rect x="57.20" y="277" width="1.3" height="4" fill="#8a9298" opacity=".7"/>
<rect x="71.20" y="274" width="1.6" height="7" fill="#7f8a92" opacity=".9"/>
<rect x="85.60" y="277" width="1.3" height="4" fill="#8a9298" opacity=".7"/>
<rect x="99.80" y="277" width="1.3" height="4" fill="#8a9298" opacity=".7"/>
<rect x="114.00" y="277" width="1.3" height="4" fill="#8a9298" opacity=".7"/>
<rect x="128.20" y="277" width="1.3" height="4" fill="#8a9298" opacity=".7"/>
<rect x="142.20" y="274" width="1.6" height="7" fill="#7f8a92" opacity=".9"/>
<rect x="156.60" y="277" width="1.3" height="4" fill="#8a9298" opacity=".7"/>
<rect x="170.80" y="277" width="1.3" height="4" fill="#8a9298" opacity=".7"/>
<rect x="185.00" y="277" width="1.3" height="4" fill="#8a9298" opacity=".7"/>
<rect x="199.20" y="277" width="1.3" height="4" fill="#8a9298" opacity=".7"/>
<rect x="213.20" y="274" width="1.6" height="7" fill="#7f8a92" opacity=".9"/>
<rect x="227.60" y="277" width="1.3" height="4" fill="#8a9298" opacity=".7"/>
<rect x="241.80" y="277" width="1.3" height="4" fill="#8a9298" opacity=".7"/>
<rect x="256.00" y="277" width="1.3" height="4" fill="#8a9298" opacity=".7"/>
<rect x="270.20" y="277" width="1.3" height="4" fill="#8a9298" opacity=".7"/>
<rect x="284.20" y="274" width="1.6" height="7" fill="#7f8a92" opacity=".9"/>
<rect x="0.5" y="0.5" width="286" height="281" fill="none" stroke="#111" stroke-width="1"/>
</svg>
<div class="t" style="right:321.5px;top:383.69px;font-size:11px;letter-spacing:0.514px;">128</div>
<div class="t" style="right:321.5px;top:418.69px;font-size:11px;letter-spacing:0.784px;">112</div>
<div class="t" style="right:321.5px;top:453.69px;font-size:11px;letter-spacing:0.675px;">96</div>
<div class="t" style="right:321.5px;top:488.69px;font-size:11px;letter-spacing:0.675px;">80</div>
<div class="t" style="right:321.5px;top:523.69px;font-size:11px;letter-spacing:0.675px;">64</div>
<div class="t" style="right:321.5px;top:558.69px;font-size:11px;letter-spacing:0.675px;">48</div>
<div class="t" style="right:321.5px;top:593.69px;font-size:11px;letter-spacing:0.675px;">32</div>
<div class="t" style="right:321.5px;top:628.69px;font-size:11px;letter-spacing:0.675px;">16</div>
<div class="t" style="right:321.5px;top:663.69px;font-size:11px;">0</div>
<div class="t" style="left:677px;top:671.69px;font-size:11px;transform:translateX(-50%);">0</div>
<div class="t" style="left:748px;top:671.69px;font-size:11px;transform:translateX(-50%);">8</div>
<div class="t" style="left:819px;top:671.69px;font-size:11px;transform:translateX(-50%);">16</div>
<div class="t" style="left:889.5px;top:671.69px;font-size:11px;transform:translateX(-50%);">24</div>
<div class="t" style="left:960.7px;top:671.69px;font-size:11px;transform:translateX(-50%);">32</div>
<div class="t" style="left:637px;top:524.5px;font-size:17px;font-weight:bold;transform:translate(-50%,-50%) rotate(90deg);transform-origin:center">Y Axis</div>
<div class="t" style="left:794px;top:695.61px;font-size:17px;font-weight:bold;">X Axis</div>
<div class="gb" style="left:622px;top:727px;width:345px;height:46px"></div>
<div class="gbt" style="left:627px;top:722px;width:63px"></div>
<div class="t" style="left:630px;top:722.69px;font-size:11px;letter-spacing:-0.172px;">Data Range</div>
<div class="t" style="left:631.2px;top:749.29px;font-size:11px;letter-spacing:-0.225px;">Minimum: 0.0000</div>
<div class="t" style="left:758.5px;top:749.29px;font-size:11px;letter-spacing:-0.048px;">Mean: 0.0000</div>
<div class="t" style="left:871.5px;top:749.29px;font-size:11px;letter-spacing:-0.176px;">Maximum: 0.0000</div>
<div class="a" style="left:980px;top:802px;width:2px;height:2px;background:#9a9a9a;box-shadow:-1px -1px 0 #fff"></div>
<div class="a" style="left:977px;top:805px;width:2px;height:2px;background:#9a9a9a;box-shadow:-1px -1px 0 #fff"></div>
<div class="a" style="left:980px;top:805px;width:2px;height:2px;background:#9a9a9a;box-shadow:-1px -1px 0 #fff"></div>
<div class="a" style="left:974px;top:808px;width:2px;height:2px;background:#9a9a9a;box-shadow:-1px -1px 0 #fff"></div>
<div class="a" style="left:977px;top:808px;width:2px;height:2px;background:#9a9a9a;box-shadow:-1px -1px 0 #fff"></div>
<div class="a" style="left:980px;top:808px;width:2px;height:2px;background:#9a9a9a;box-shadow:-1px -1px 0 #fff"></div>
</body></html>
